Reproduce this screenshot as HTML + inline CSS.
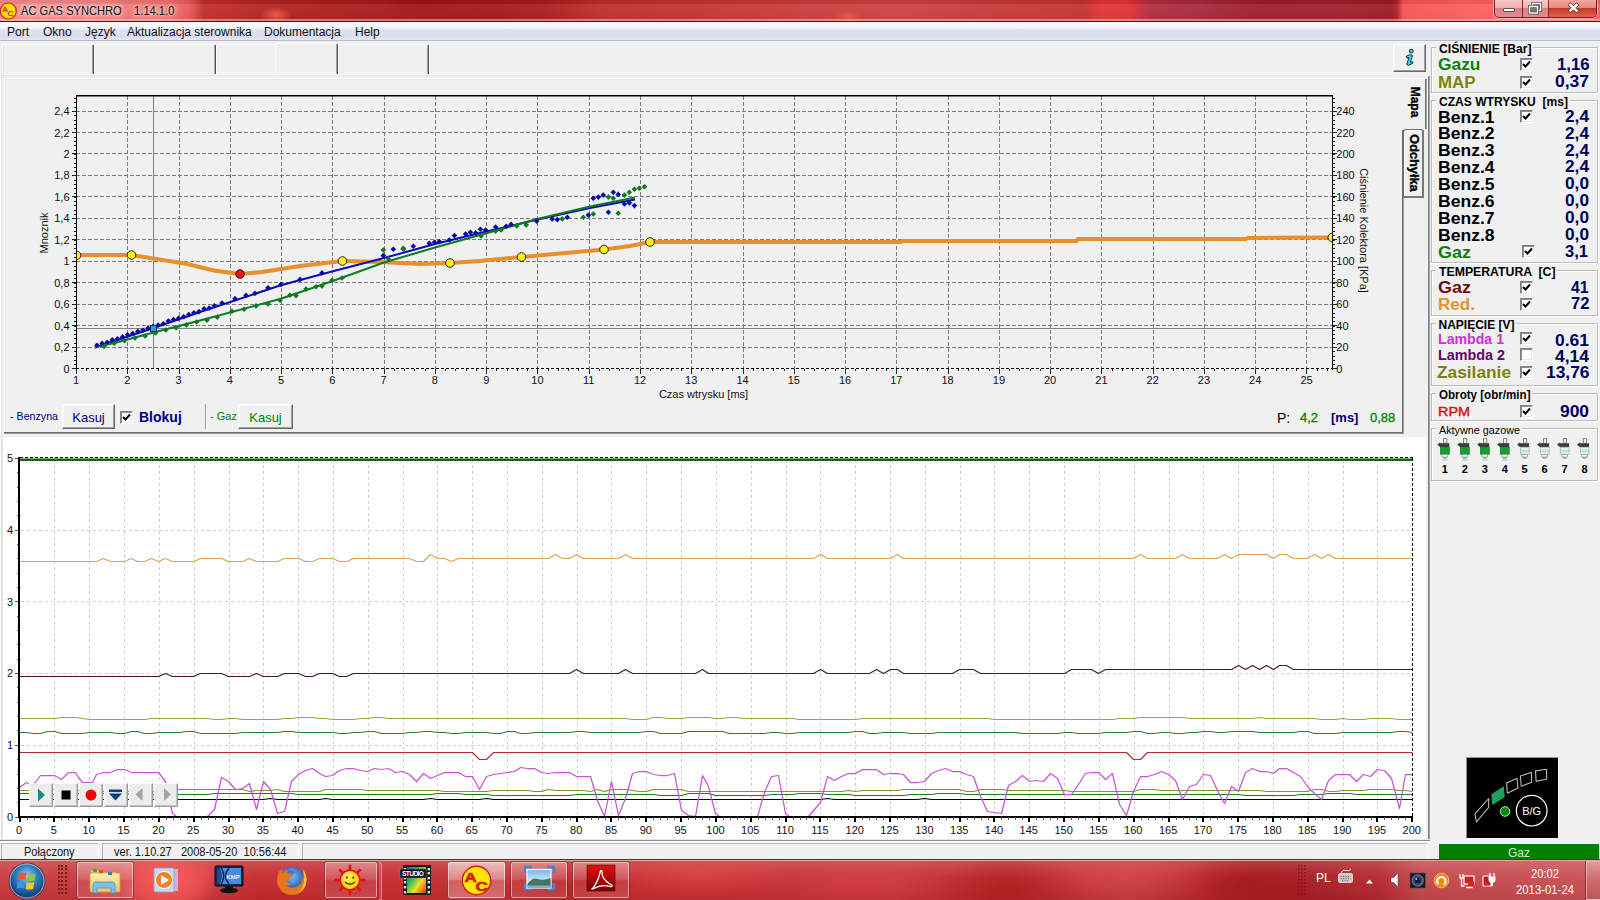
<!DOCTYPE html>
<html><head><meta charset="utf-8"><title>AC GAS SYNCHRO</title>
<style>
*{box-sizing:border-box;margin:0;padding:0}
html,body{width:1600px;height:900px;overflow:hidden;background:#f0f0f0;font-family:"Liberation Sans",sans-serif;font-size:12px;color:#000}
.a{position:absolute}
svg{position:absolute;overflow:visible}
svg text{font-family:"Liberation Sans",sans-serif}
#title{left:0;top:0;width:1600px;height:22px;background:
 linear-gradient(180deg,rgba(0,0,0,.05) 0,rgba(0,0,0,.05) 4px,rgba(255,255,255,.07) 4px,rgba(255,255,255,.04) 19px,rgba(255,190,190,.55) 19.5px,rgba(255,190,190,.55) 20.5px,rgba(0,0,0,0) 21px),
 radial-gradient(ellipse 16px 8px at 276px 15px,rgba(250,90,60,.85),transparent),
 radial-gradient(ellipse 14px 7px at 848px 17px,rgba(245,85,60,.7),transparent),
 radial-gradient(ellipse 40px 14px at 420px 4px,rgba(140,10,10,.4),transparent),
 linear-gradient(90deg,#f58a8a 0,#f27c7c 100px,#ee6a6a 170px,#e65656 190px,#c02a2a 204px,#b42222 260px,#ab1c1c 320px,#a41818 400px,#a01616 480px,#a61a1a 540px,#bd2a2a 600px,#c43030 700px,#c83a3a 800px,#c94040 900px,#c43636 1000px,#c23030 1085px,#e03232 1100px,#dc3030 1130px,#b02a3e 1150px,#a6263a 1200px,#9c1a28 1260px,#a01c2a 1340px,#9a1822 1392px,#b01c22 1397px,#f45252 1403px,#fa5e5e 1480px,#f95c5c 1600px);
 border-bottom:1px solid #5a1212}
#title .t{left:21px;top:4px;transform:scaleX(.927);transform-origin:0 0;font-size:12px;color:#111;white-space:pre;text-shadow:0 0 6px rgba(255,255,255,.9),0 0 9px rgba(255,255,255,.7),0 0 3px rgba(255,255,255,.6)}
#menu{left:0;top:22px;width:1600px;height:19px;background:linear-gradient(180deg,#fdfdfe 0,#f3f5fb 30%,#dfe3f1 45%,#d9ddee 85%,#e4e7f3 100%);border-bottom:1px solid #b7bccf}
#menu span{position:absolute;top:3px;font-size:12px;color:#111;white-space:pre}
.vs{position:absolute;width:3px;background:linear-gradient(90deg,#a4a4a4 0,#a4a4a4 33%,#555 33%,#555 67%,#fbfbfb 67%)}
.hl{position:absolute;height:1px;background:#fff}
.btn{position:absolute;background:#f0f0f0;border:1px solid;border-color:#fff #696969 #696969 #fff;box-shadow:inset -1px -1px 0 #a0a0a0,inset 1px 1px 0 #f8f8f8;font-size:13px;text-align:center}
.btn span{position:relative;top:5px}
.cb{position:absolute;width:13px;height:13px;background:#fff;border:1px solid;border-color:#808080 #fff #fff #808080;box-shadow:inset 1px 1px 0 #8c8c8c,inset -1px -1px 0 #e6e6e6}
.cb svg{left:-1px;top:-1px}
</style></head><body>
<div id="title" class="a">
 <svg style="left:0;top:2px" width="18" height="18" viewBox="0 0 18 18"><circle cx="8.3" cy="9" r="8" fill="#ffe000" stroke="#c8201a" stroke-width="1.2"/><text x="2.2" y="9.5" font-size="8" font-weight="bold" fill="#d0201a">A</text><text x="7.6" y="14.2" font-size="8" font-weight="bold" fill="#d0201a">C</text></svg>
 <div class="a t">AC GAS SYNCHRO    1.14.1.0</div>
 <!-- window buttons -->
 <div class="a" style="left:1494px;top:0;width:103px;height:18px;border:1px solid #6a2020;border-top:none;border-radius:0 0 5px 5px;background:linear-gradient(180deg,#f9caca 0,#f3aeae 45%,#db7e86 50%,#e28c92 100%);box-shadow:0 0 0 1px rgba(255,255,255,.45)"></div>
 <div class="a" style="left:1522px;top:0;width:1px;height:17px;background:#7a2a2a"></div>
 <div class="a" style="left:1548px;top:0;width:1px;height:17px;background:#7a2a2a"></div>
 <div class="a" style="left:1549px;top:0;width:47px;height:17px;border-radius:0 0 4px 0;background:linear-gradient(180deg,#f2aa9e 0,#e98a7a 45%,#c43a26 50%,#df644a 100%)"></div>
 <div class="a" style="left:1503px;top:8px;width:12px;height:4px;background:#fff;border:1px solid #555;border-radius:1px"></div>
 <svg style="left:1528px;top:2px" width="14" height="12" viewBox="0 0 14 12"><rect x="4.5" y="1.5" width="8" height="7" fill="none" stroke="#555" stroke-width="3"/><rect x="4.5" y="1.5" width="8" height="7" fill="none" stroke="#fff" stroke-width="1.4"/><rect x="1.5" y="4.5" width="8" height="6.5" fill="#8a7078" stroke="#555" stroke-width="3"/><rect x="1.5" y="4.5" width="8" height="6.5" fill="none" stroke="#fff" stroke-width="1.4"/></svg>
 <svg style="left:1567px;top:3px" width="13" height="10" viewBox="0 0 13 10"><path d="M3.4 2 L9.6 7.6 M9.6 2 L3.4 7.6" stroke="#5a3434" stroke-width="3.9" stroke-linecap="square"/><path d="M3.4 2 L9.6 7.6 M9.6 2 L3.4 7.6" stroke="#fff" stroke-width="2.5" stroke-linecap="square"/></svg>
</div>
<div id="menu" class="a">
 <span style="left:7px">Port</span><span style="left:43px">Okno</span><span style="left:85px">Język</span><span style="left:127px">Aktualizacja sterownika</span><span style="left:264px">Dokumentacja</span><span style="left:355px">Help</span>
</div>
<!-- toolbar -->
<div class="hl" style="left:3px;top:44px;width:90px"></div><div class="a" style="left:2px;top:44px;width:1px;height:31px;background:#fff"></div><div class="a" style="left:3px;top:45px;width:1px;height:29px;background:#e2e2e2"></div>
<div class="vs" style="left:92px;top:45px;height:29px"></div>
<div class="hl" style="left:95px;top:44px;width:120px"></div>
<div class="vs" style="left:214px;top:45px;height:29px"></div>
<div class="hl" style="left:217px;top:44px;width:58px"></div>
<div class="a" style="left:275px;top:44px;width:1px;height:31px;background:#fafafa"></div>
<div class="hl" style="left:276px;top:43px;width:61px"></div>
<div class="vs" style="left:336px;top:44px;height:30px"></div>
<div class="hl" style="left:339px;top:44px;width:89px"></div>
<div class="vs" style="left:427px;top:45px;height:29px"></div>
<div class="hl" style="left:0;top:74px;width:1392px;background:#fbfbfb"></div><div class="hl" style="left:1px;top:75px;width:1391px;background:#e4e4e4"></div>
<!-- upper panel -->
<div class="a" style="left:4px;top:78px;width:1400px;height:1px;background:#fff"></div>
<div class="a" style="left:4px;top:78px;width:1px;height:356px;background:#fff"></div>
<div class="a" style="left:4px;top:432px;width:1400px;height:2px;background:linear-gradient(180deg,#6e6e6e 0,#6e6e6e 50%,#9c9c9c 50%,#9c9c9c 100%)"></div>
<div class="a" style="left:1402px;top:130px;width:2px;height:304px;background:linear-gradient(90deg,#6e6e6e 0,#6e6e6e 50%,#9c9c9c 50%,#9c9c9c 100%)"></div>
<div class="a" style="left:0;top:75px;width:1px;height:765px;background:#fafafa"></div>
<div class="a" style="left:1px;top:75px;width:1px;height:362px;background:#e3e3e3"></div>
<div class="a" style="left:1px;top:436px;width:2.4px;height:404px;background:#e3e3e3"></div>
<div class="a" style="left:5px;top:79px;width:1397px;height:1px;background:#e6e6e6"></div>
<div class="a" style="left:5px;top:79px;width:1px;height:353px;background:#e6e6e6"></div>
<svg style="left:0;top:0" width="1600" height="440" viewBox="0 0 1600 440">
<path d="M127.5 95.5 V368.5 M179.5 95.5 V368.5 M230.5 95.5 V368.5 M281.5 95.5 V368.5 M332.5 95.5 V368.5 M384.5 95.5 V368.5 M435.5 95.5 V368.5 M486.5 95.5 V368.5 M537.5 95.5 V368.5 M589.5 95.5 V368.5 M640.5 95.5 V368.5 M691.5 95.5 V368.5 M743.5 95.5 V368.5 M794.5 95.5 V368.5 M845.5 95.5 V368.5 M896.5 95.5 V368.5 M948.5 95.5 V368.5 M999.5 95.5 V368.5 M1050.5 95.5 V368.5 M1101.5 95.5 V368.5 M1153.5 95.5 V368.5 M1204.5 95.5 V368.5 M1255.5 95.5 V368.5 M1306.5 95.5 V368.5 M76 347.5 H1332 M76 325.5 H1332 M76 304.5 H1332 M76 282.5 H1332 M76 261.5 H1332 M76 239.5 H1332 M76 218.5 H1332 M76 196.5 H1332 M76 175.5 H1332 M76 153.5 H1332 M76 132.5 H1332 M76 111.5 H1332" stroke="#7d7d7d" stroke-width="1" stroke-dasharray="4 2" fill="none" shape-rendering="crispEdges"/>
<path d="M153.5 95.5 V368.5 M76 328.5 H1332" stroke="#808080" stroke-width="1" fill="none" shape-rendering="crispEdges"/>
<path d="M76 95.8 H1333" stroke="#000" stroke-width="1.4" fill="none"/>
<path d="M76.5 95.5 V368.5 M1332.5 95.5 V369.5" stroke="#000" stroke-width="1" fill="none" shape-rendering="crispEdges"/>
<path d="M76 368.5 H1332" stroke="#000" stroke-width="1" stroke-dasharray="3 2" fill="none" shape-rendering="crispEdges"/>
<path d="M72 368.5 H76 M1332 368.5 H1337 M72 347.5 H76 M1332 347.5 H1337 M72 325.5 H76 M1332 325.5 H1337 M72 304.5 H76 M1332 304.5 H1337 M72 282.5 H76 M1332 282.5 H1337 M72 261.5 H76 M1332 261.5 H1337 M72 239.5 H76 M1332 239.5 H1337 M72 218.5 H76 M1332 218.5 H1337 M72 196.5 H76 M1332 196.5 H1337 M72 175.5 H76 M1332 175.5 H1337 M72 153.5 H76 M1332 153.5 H1337 M72 132.5 H76 M1332 132.5 H1337 M72 111.5 H76 M1332 111.5 H1337 M74 368.5 H76 M1332 368.5 H1335 M74 364.5 H76 M1332 364.5 H1335 M74 360.5 H76 M1332 360.5 H1335 M74 356.5 H76 M1332 356.5 H1335 M74 351.5 H76 M1332 351.5 H1335 M74 347.5 H76 M1332 347.5 H1335 M74 343.5 H76 M1332 343.5 H1335 M74 338.5 H76 M1332 338.5 H1335 M74 334.5 H76 M1332 334.5 H1335 M74 330.5 H76 M1332 330.5 H1335 M74 326.5 H76 M1332 326.5 H1335 M74 321.5 H76 M1332 321.5 H1335 M74 317.5 H76 M1332 317.5 H1335 M74 313.5 H76 M1332 313.5 H1335 M74 308.5 H76 M1332 308.5 H1335 M74 304.5 H76 M1332 304.5 H1335 M74 300.5 H76 M1332 300.5 H1335 M74 296.5 H76 M1332 296.5 H1335 M74 291.5 H76 M1332 291.5 H1335 M74 287.5 H76 M1332 287.5 H1335 M74 283.5 H76 M1332 283.5 H1335 M74 278.5 H76 M1332 278.5 H1335 M74 274.5 H76 M1332 274.5 H1335 M74 270.5 H76 M1332 270.5 H1335 M74 266.5 H76 M1332 266.5 H1335 M74 261.5 H76 M1332 261.5 H1335 M74 257.5 H76 M1332 257.5 H1335 M74 253.5 H76 M1332 253.5 H1335 M74 248.5 H76 M1332 248.5 H1335 M74 244.5 H76 M1332 244.5 H1335 M74 240.5 H76 M1332 240.5 H1335 M74 235.5 H76 M1332 235.5 H1335 M74 231.5 H76 M1332 231.5 H1335 M74 227.5 H76 M1332 227.5 H1335 M74 223.5 H76 M1332 223.5 H1335 M74 218.5 H76 M1332 218.5 H1335 M74 214.5 H76 M1332 214.5 H1335 M74 210.5 H76 M1332 210.5 H1335 M74 205.5 H76 M1332 205.5 H1335 M74 201.5 H76 M1332 201.5 H1335 M74 197.5 H76 M1332 197.5 H1335 M74 193.5 H76 M1332 193.5 H1335 M74 188.5 H76 M1332 188.5 H1335 M74 184.5 H76 M1332 184.5 H1335 M74 180.5 H76 M1332 180.5 H1335 M74 175.5 H76 M1332 175.5 H1335 M74 171.5 H76 M1332 171.5 H1335 M74 167.5 H76 M1332 167.5 H1335 M74 163.5 H76 M1332 163.5 H1335 M74 158.5 H76 M1332 158.5 H1335 M74 154.5 H76 M1332 154.5 H1335 M74 150.5 H76 M1332 150.5 H1335 M74 145.5 H76 M1332 145.5 H1335 M74 141.5 H76 M1332 141.5 H1335 M74 137.5 H76 M1332 137.5 H1335 M74 132.5 H76 M1332 132.5 H1335 M74 128.5 H76 M1332 128.5 H1335 M74 124.5 H76 M1332 124.5 H1335 M74 120.5 H76 M1332 120.5 H1335 M74 115.5 H76 M1332 115.5 H1335 M74 111.5 H76 M1332 111.5 H1335 M74 107.5 H76 M1332 107.5 H1335 M74 102.5 H76 M1332 102.5 H1335 M74 98.5 H76 M1332 98.5 H1335 M76.5 368.5 V373.5 M127.5 368.5 V373.5 M179.5 368.5 V373.5 M230.5 368.5 V373.5 M281.5 368.5 V373.5 M332.5 368.5 V373.5 M384.5 368.5 V373.5 M435.5 368.5 V373.5 M486.5 368.5 V373.5 M537.5 368.5 V373.5 M589.5 368.5 V373.5 M640.5 368.5 V373.5 M691.5 368.5 V373.5 M743.5 368.5 V373.5 M794.5 368.5 V373.5 M845.5 368.5 V373.5 M896.5 368.5 V373.5 M948.5 368.5 V373.5 M999.5 368.5 V373.5 M1050.5 368.5 V373.5 M1101.5 368.5 V373.5 M1153.5 368.5 V373.5 M1204.5 368.5 V373.5 M1255.5 368.5 V373.5 M1306.5 368.5 V373.5 M76.5 368.5 V370.5 M86.5 368.5 V370.5 M97.5 368.5 V370.5 M107.5 368.5 V370.5 M117.5 368.5 V370.5 M127.5 368.5 V370.5 M138.5 368.5 V370.5 M148.5 368.5 V370.5 M158.5 368.5 V370.5 M168.5 368.5 V370.5 M179.5 368.5 V370.5 M189.5 368.5 V370.5 M199.5 368.5 V370.5 M209.5 368.5 V370.5 M220.5 368.5 V370.5 M230.5 368.5 V370.5 M240.5 368.5 V370.5 M250.5 368.5 V370.5 M261.5 368.5 V370.5 M271.5 368.5 V370.5 M281.5 368.5 V370.5 M291.5 368.5 V370.5 M302.5 368.5 V370.5 M312.5 368.5 V370.5 M322.5 368.5 V370.5 M332.5 368.5 V370.5 M343.5 368.5 V370.5 M353.5 368.5 V370.5 M363.5 368.5 V370.5 M373.5 368.5 V370.5 M384.5 368.5 V370.5 M394.5 368.5 V370.5 M404.5 368.5 V370.5 M414.5 368.5 V370.5 M425.5 368.5 V370.5 M435.5 368.5 V370.5 M445.5 368.5 V370.5 M455.5 368.5 V370.5 M466.5 368.5 V370.5 M476.5 368.5 V370.5 M486.5 368.5 V370.5 M496.5 368.5 V370.5 M507.5 368.5 V370.5 M517.5 368.5 V370.5 M527.5 368.5 V370.5 M537.5 368.5 V370.5 M548.5 368.5 V370.5 M558.5 368.5 V370.5 M568.5 368.5 V370.5 M578.5 368.5 V370.5 M589.5 368.5 V370.5 M599.5 368.5 V370.5 M609.5 368.5 V370.5 M619.5 368.5 V370.5 M630.5 368.5 V370.5 M640.5 368.5 V370.5 M650.5 368.5 V370.5 M660.5 368.5 V370.5 M671.5 368.5 V370.5 M681.5 368.5 V370.5 M691.5 368.5 V370.5 M701.5 368.5 V370.5 M712.5 368.5 V370.5 M722.5 368.5 V370.5 M732.5 368.5 V370.5 M743.5 368.5 V370.5 M753.5 368.5 V370.5 M763.5 368.5 V370.5 M773.5 368.5 V370.5 M784.5 368.5 V370.5 M794.5 368.5 V370.5 M804.5 368.5 V370.5 M814.5 368.5 V370.5 M825.5 368.5 V370.5 M835.5 368.5 V370.5 M845.5 368.5 V370.5 M855.5 368.5 V370.5 M866.5 368.5 V370.5 M876.5 368.5 V370.5 M886.5 368.5 V370.5 M896.5 368.5 V370.5 M907.5 368.5 V370.5 M917.5 368.5 V370.5 M927.5 368.5 V370.5 M937.5 368.5 V370.5 M948.5 368.5 V370.5 M958.5 368.5 V370.5 M968.5 368.5 V370.5 M978.5 368.5 V370.5 M989.5 368.5 V370.5 M999.5 368.5 V370.5 M1009.5 368.5 V370.5 M1019.5 368.5 V370.5 M1030.5 368.5 V370.5 M1040.5 368.5 V370.5 M1050.5 368.5 V370.5 M1060.5 368.5 V370.5 M1071.5 368.5 V370.5 M1081.5 368.5 V370.5 M1091.5 368.5 V370.5 M1101.5 368.5 V370.5 M1112.5 368.5 V370.5 M1122.5 368.5 V370.5 M1132.5 368.5 V370.5 M1142.5 368.5 V370.5 M1153.5 368.5 V370.5 M1163.5 368.5 V370.5 M1173.5 368.5 V370.5 M1183.5 368.5 V370.5 M1194.5 368.5 V370.5 M1204.5 368.5 V370.5 M1214.5 368.5 V370.5 M1224.5 368.5 V370.5 M1235.5 368.5 V370.5 M1245.5 368.5 V370.5 M1255.5 368.5 V370.5 M1265.5 368.5 V370.5 M1276.5 368.5 V370.5 M1286.5 368.5 V370.5 M1296.5 368.5 V370.5 M1306.5 368.5 V370.5 M1317.5 368.5 V370.5 M1327.5 368.5 V370.5" stroke="#222" stroke-width="1" fill="none" shape-rendering="crispEdges"/>
<g font-size="11" fill="#111"><text x="69.5" y="372.5" text-anchor="end">0</text><text x="1336.3" y="372.5">0</text><text x="69.5" y="351" text-anchor="end">0,2</text><text x="1336.3" y="351">20</text><text x="69.5" y="329.6" text-anchor="end">0,4</text><text x="1336.3" y="329.6">40</text><text x="69.5" y="308.1" text-anchor="end">0,6</text><text x="1336.3" y="308.1">60</text><text x="69.5" y="286.7" text-anchor="end">0,8</text><text x="1336.3" y="286.7">80</text><text x="69.5" y="265.2" text-anchor="end">1</text><text x="1336.3" y="265.2">100</text><text x="69.5" y="243.8" text-anchor="end">1,2</text><text x="1336.3" y="243.8">120</text><text x="69.5" y="222.3" text-anchor="end">1,4</text><text x="1336.3" y="222.3">140</text><text x="69.5" y="200.8" text-anchor="end">1,6</text><text x="1336.3" y="200.8">160</text><text x="69.5" y="179.4" text-anchor="end">1,8</text><text x="1336.3" y="179.4">180</text><text x="69.5" y="157.9" text-anchor="end">2</text><text x="1336.3" y="157.9">200</text><text x="69.5" y="136.5" text-anchor="end">2,2</text><text x="1336.3" y="136.5">220</text><text x="69.5" y="115" text-anchor="end">2,4</text><text x="1336.3" y="115">240</text><text x="76" y="383.7" text-anchor="middle">1</text><text x="127.3" y="383.7" text-anchor="middle">2</text><text x="178.5" y="383.7" text-anchor="middle">3</text><text x="229.8" y="383.7" text-anchor="middle">4</text><text x="281.1" y="383.7" text-anchor="middle">5</text><text x="332.4" y="383.7" text-anchor="middle">6</text><text x="383.6" y="383.7" text-anchor="middle">7</text><text x="434.9" y="383.7" text-anchor="middle">8</text><text x="486.2" y="383.7" text-anchor="middle">9</text><text x="537.4" y="383.7" text-anchor="middle">10</text><text x="588.7" y="383.7" text-anchor="middle">11</text><text x="640" y="383.7" text-anchor="middle">12</text><text x="691.2" y="383.7" text-anchor="middle">13</text><text x="742.5" y="383.7" text-anchor="middle">14</text><text x="793.8" y="383.7" text-anchor="middle">15</text><text x="845.1" y="383.7" text-anchor="middle">16</text><text x="896.3" y="383.7" text-anchor="middle">17</text><text x="947.6" y="383.7" text-anchor="middle">18</text><text x="998.9" y="383.7" text-anchor="middle">19</text><text x="1050.1" y="383.7" text-anchor="middle">20</text><text x="1101.4" y="383.7" text-anchor="middle">21</text><text x="1152.7" y="383.7" text-anchor="middle">22</text><text x="1203.9" y="383.7" text-anchor="middle">23</text><text x="1255.2" y="383.7" text-anchor="middle">24</text><text x="1306.5" y="383.7" text-anchor="middle">25</text><text x="703.5" y="398" text-anchor="middle">Czas wtrysku [ms]</text><text transform="translate(48,233) rotate(-90)" text-anchor="middle">Mnoznik</text><text transform="translate(1359.5,230.5) rotate(90)" text-anchor="middle">Ciśnienie Kolektora [KPa]</text></g>
<polyline points="76,255 131.5,255 150,258 185,263.5 214,270.5 240,274 262,272 300,266 342.5,261 380,262 420,264 450,263 480,261 521.5,257 560,253.5 604,249.5 630,246 650,242 700,242 901,242 903,241 1076,241 1078,239 1246,239 1248,238 1332,237.5" stroke="#e8902c" stroke-width="4" fill="none" stroke-linejoin="round"/>
<polyline points="95,347.5 153.5,328 200,312 280,285.5 330,272 384,258 435,244 480,233 537.5,219.5 590,208 635,199.5" stroke="#0c0cbe" stroke-width="2" fill="none"/>
<polyline points="95,347.5 120,341.5 153.5,332.5 200,320.5 280,299 330,282 384,262.5 435,247.5 480,235 537.5,219 590,206.5 635,197.5" stroke="#0e7a22" stroke-width="2" fill="none"/>
<path d="M97 342.5 l2.8 2.8 l-2.8 2.8 l-2.8 -2.8 z" fill="#0a0aac"/><path d="M102.1 340.6 l2.8 2.8 l-2.8 2.8 l-2.8 -2.8 z" fill="#0a0aac"/><path d="M107.2 339.5 l2.8 2.8 l-2.8 2.8 l-2.8 -2.8 z" fill="#0a0aac"/><path d="M112.3 337.1 l2.8 2.8 l-2.8 2.8 l-2.8 -2.8 z" fill="#0a0aac"/><path d="M117.4 336 l2.8 2.8 l-2.8 2.8 l-2.8 -2.8 z" fill="#0a0aac"/><path d="M122.5 334.1 l2.8 2.8 l-2.8 2.8 l-2.8 -2.8 z" fill="#0a0aac"/><path d="M127.6 332 l2.8 2.8 l-2.8 2.8 l-2.8 -2.8 z" fill="#0a0aac"/><path d="M132.7 330.8 l2.8 2.8 l-2.8 2.8 l-2.8 -2.8 z" fill="#0a0aac"/><path d="M137.8 328.6 l2.8 2.8 l-2.8 2.8 l-2.8 -2.8 z" fill="#0a0aac"/><path d="M142.9 327.4 l2.8 2.8 l-2.8 2.8 l-2.8 -2.8 z" fill="#0a0aac"/><path d="M148 325.2 l2.8 2.8 l-2.8 2.8 l-2.8 -2.8 z" fill="#0a0aac"/><path d="M153.1 323.5 l2.8 2.8 l-2.8 2.8 l-2.8 -2.8 z" fill="#0a0aac"/><path d="M158.2 322.2 l2.8 2.8 l-2.8 2.8 l-2.8 -2.8 z" fill="#0a0aac"/><path d="M163.3 320.9 l2.8 2.8 l-2.8 2.8 l-2.8 -2.8 z" fill="#0a0aac"/><path d="M168.4 318.3 l2.8 2.8 l-2.8 2.8 l-2.8 -2.8 z" fill="#0a0aac"/><path d="M173.5 316.7 l2.8 2.8 l-2.8 2.8 l-2.8 -2.8 z" fill="#0a0aac"/><path d="M178.6 315.4 l2.8 2.8 l-2.8 2.8 l-2.8 -2.8 z" fill="#0a0aac"/><path d="M183.7 314 l2.8 2.8 l-2.8 2.8 l-2.8 -2.8 z" fill="#0a0aac"/><path d="M188.8 311.8 l2.8 2.8 l-2.8 2.8 l-2.8 -2.8 z" fill="#0a0aac"/><path d="M193.9 309.9 l2.8 2.8 l-2.8 2.8 l-2.8 -2.8 z" fill="#0a0aac"/><path d="M199 308.8 l2.8 2.8 l-2.8 2.8 l-2.8 -2.8 z" fill="#0a0aac"/><path d="M204.1 306 l2.8 2.8 l-2.8 2.8 l-2.8 -2.8 z" fill="#0a0aac"/><path d="M209.2 305.3 l2.8 2.8 l-2.8 2.8 l-2.8 -2.8 z" fill="#0a0aac"/><path d="M214.3 302.9 l2.8 2.8 l-2.8 2.8 l-2.8 -2.8 z" fill="#0a0aac"/><path d="M222 300.2 l2.8 2.8 l-2.8 2.8 l-2.8 -2.8 z" fill="#0a0aac"/><path d="M235 295.8 l2.8 2.8 l-2.8 2.8 l-2.8 -2.8 z" fill="#0a0aac"/><path d="M246 292.6 l2.8 2.8 l-2.8 2.8 l-2.8 -2.8 z" fill="#0a0aac"/><path d="M255 290.6 l2.8 2.8 l-2.8 2.8 l-2.8 -2.8 z" fill="#0a0aac"/><path d="M268 285 l2.8 2.8 l-2.8 2.8 l-2.8 -2.8 z" fill="#0a0aac"/><path d="M281 281.6 l2.8 2.8 l-2.8 2.8 l-2.8 -2.8 z" fill="#0a0aac"/><path d="M300 276.6 l2.8 2.8 l-2.8 2.8 l-2.8 -2.8 z" fill="#0a0aac"/><path d="M322 270.1 l2.8 2.8 l-2.8 2.8 l-2.8 -2.8 z" fill="#0a0aac"/><path d="M104 343.6 l2.8 2.8 l-2.8 2.8 l-2.8 -2.8 z" fill="#0e7a22"/><path d="M114.3 340.4 l2.8 2.8 l-2.8 2.8 l-2.8 -2.8 z" fill="#0e7a22"/><path d="M124.6 337.8 l2.8 2.8 l-2.8 2.8 l-2.8 -2.8 z" fill="#0e7a22"/><path d="M134.9 335.2 l2.8 2.8 l-2.8 2.8 l-2.8 -2.8 z" fill="#0e7a22"/><path d="M145.2 333.2 l2.8 2.8 l-2.8 2.8 l-2.8 -2.8 z" fill="#0e7a22"/><path d="M155.5 330.1 l2.8 2.8 l-2.8 2.8 l-2.8 -2.8 z" fill="#0e7a22"/><path d="M165.8 327.2 l2.8 2.8 l-2.8 2.8 l-2.8 -2.8 z" fill="#0e7a22"/><path d="M176.1 325 l2.8 2.8 l-2.8 2.8 l-2.8 -2.8 z" fill="#0e7a22"/><path d="M186.4 322.1 l2.8 2.8 l-2.8 2.8 l-2.8 -2.8 z" fill="#0e7a22"/><path d="M196.7 319.2 l2.8 2.8 l-2.8 2.8 l-2.8 -2.8 z" fill="#0e7a22"/><path d="M207 317.3 l2.8 2.8 l-2.8 2.8 l-2.8 -2.8 z" fill="#0e7a22"/><path d="M217.3 314.4 l2.8 2.8 l-2.8 2.8 l-2.8 -2.8 z" fill="#0e7a22"/><path d="M232 308.5 l2.8 2.8 l-2.8 2.8 l-2.8 -2.8 z" fill="#0e7a22"/><path d="M244 306.5 l2.8 2.8 l-2.8 2.8 l-2.8 -2.8 z" fill="#0e7a22"/><path d="M256 303.1 l2.8 2.8 l-2.8 2.8 l-2.8 -2.8 z" fill="#0e7a22"/><path d="M268 301.2 l2.8 2.8 l-2.8 2.8 l-2.8 -2.8 z" fill="#0e7a22"/><path d="M280 297.4 l2.8 2.8 l-2.8 2.8 l-2.8 -2.8 z" fill="#0e7a22"/><path d="M290 292.4 l2.8 2.8 l-2.8 2.8 l-2.8 -2.8 z" fill="#0e7a22"/><path d="M296 292.9 l2.8 2.8 l-2.8 2.8 l-2.8 -2.8 z" fill="#0e7a22"/><path d="M306 286.3 l2.8 2.8 l-2.8 2.8 l-2.8 -2.8 z" fill="#0e7a22"/><path d="M316 284 l2.8 2.8 l-2.8 2.8 l-2.8 -2.8 z" fill="#0e7a22"/><path d="M322 283.2 l2.8 2.8 l-2.8 2.8 l-2.8 -2.8 z" fill="#0e7a22"/><path d="M332 277.5 l2.8 2.8 l-2.8 2.8 l-2.8 -2.8 z" fill="#0e7a22"/><path d="M342 275.2 l2.8 2.8 l-2.8 2.8 l-2.8 -2.8 z" fill="#0e7a22"/><path d="M593.3 195.4 l2.8 2.8 l-2.8 2.8 l-2.8 -2.8 z" fill="#0a0aac"/><path d="M598.4 194.3 l2.8 2.8 l-2.8 2.8 l-2.8 -2.8 z" fill="#0a0aac"/><path d="M603.3 192.3 l2.8 2.8 l-2.8 2.8 l-2.8 -2.8 z" fill="#0a0aac"/><path d="M613.3 189.4 l2.8 2.8 l-2.8 2.8 l-2.8 -2.8 z" fill="#0a0aac"/><path d="M618.2 191.6 l2.8 2.8 l-2.8 2.8 l-2.8 -2.8 z" fill="#0a0aac"/><path d="M608.4 209.4 l2.8 2.8 l-2.8 2.8 l-2.8 -2.8 z" fill="#0a0aac"/><path d="M624.4 201.2 l2.8 2.8 l-2.8 2.8 l-2.8 -2.8 z" fill="#0a0aac"/><path d="M629.3 200.1 l2.8 2.8 l-2.8 2.8 l-2.8 -2.8 z" fill="#0a0aac"/><path d="M634.4 202.8 l2.8 2.8 l-2.8 2.8 l-2.8 -2.8 z" fill="#0a0aac"/><path d="M588.4 212.3 l2.8 2.8 l-2.8 2.8 l-2.8 -2.8 z" fill="#0a0aac"/><path d="M567.3 214.5 l2.8 2.8 l-2.8 2.8 l-2.8 -2.8 z" fill="#0a0aac"/><path d="M557.3 216.8 l2.8 2.8 l-2.8 2.8 l-2.8 -2.8 z" fill="#0a0aac"/><path d="M552.2 216.1 l2.8 2.8 l-2.8 2.8 l-2.8 -2.8 z" fill="#0a0aac"/><path d="M536.7 218.3 l2.8 2.8 l-2.8 2.8 l-2.8 -2.8 z" fill="#0a0aac"/><path d="M511.1 221.6 l2.8 2.8 l-2.8 2.8 l-2.8 -2.8 z" fill="#0a0aac"/><path d="M506.2 223.4 l2.8 2.8 l-2.8 2.8 l-2.8 -2.8 z" fill="#0a0aac"/><path d="M495.6 224.3 l2.8 2.8 l-2.8 2.8 l-2.8 -2.8 z" fill="#0a0aac"/><path d="M485.6 227.2 l2.8 2.8 l-2.8 2.8 l-2.8 -2.8 z" fill="#0a0aac"/><path d="M480.4 226.5 l2.8 2.8 l-2.8 2.8 l-2.8 -2.8 z" fill="#0a0aac"/><path d="M475.6 230.1 l2.8 2.8 l-2.8 2.8 l-2.8 -2.8 z" fill="#0a0aac"/><path d="M470.4 229.4 l2.8 2.8 l-2.8 2.8 l-2.8 -2.8 z" fill="#0a0aac"/><path d="M465.6 231.2 l2.8 2.8 l-2.8 2.8 l-2.8 -2.8 z" fill="#0a0aac"/><path d="M454.4 232.8 l2.8 2.8 l-2.8 2.8 l-2.8 -2.8 z" fill="#0a0aac"/><path d="M449.3 237.2 l2.8 2.8 l-2.8 2.8 l-2.8 -2.8 z" fill="#0a0aac"/><path d="M439.3 238.8 l2.8 2.8 l-2.8 2.8 l-2.8 -2.8 z" fill="#0a0aac"/><path d="M434.4 239.4 l2.8 2.8 l-2.8 2.8 l-2.8 -2.8 z" fill="#0a0aac"/><path d="M429.3 240.5 l2.8 2.8 l-2.8 2.8 l-2.8 -2.8 z" fill="#0a0aac"/><path d="M413.3 243.4 l2.8 2.8 l-2.8 2.8 l-2.8 -2.8 z" fill="#0a0aac"/><path d="M403.3 246.1 l2.8 2.8 l-2.8 2.8 l-2.8 -2.8 z" fill="#0a0aac"/><path d="M393.3 246.5 l2.8 2.8 l-2.8 2.8 l-2.8 -2.8 z" fill="#0a0aac"/><path d="M383.3 252.8 l2.8 2.8 l-2.8 2.8 l-2.8 -2.8 z" fill="#0a0aac"/><path d="M644.4 183.9 l2.8 2.8 l-2.8 2.8 l-2.8 -2.8 z" fill="#0e7a22"/><path d="M639.3 185.4 l2.8 2.8 l-2.8 2.8 l-2.8 -2.8 z" fill="#0e7a22"/><path d="M634.4 186.5 l2.8 2.8 l-2.8 2.8 l-2.8 -2.8 z" fill="#0e7a22"/><path d="M629.3 189.4 l2.8 2.8 l-2.8 2.8 l-2.8 -2.8 z" fill="#0e7a22"/><path d="M624.4 192.3 l2.8 2.8 l-2.8 2.8 l-2.8 -2.8 z" fill="#0e7a22"/><path d="M613.3 195.4 l2.8 2.8 l-2.8 2.8 l-2.8 -2.8 z" fill="#0e7a22"/><path d="M608.4 194.3 l2.8 2.8 l-2.8 2.8 l-2.8 -2.8 z" fill="#0e7a22"/><path d="M618.2 210.5 l2.8 2.8 l-2.8 2.8 l-2.8 -2.8 z" fill="#0e7a22"/><path d="M593.3 211.2 l2.8 2.8 l-2.8 2.8 l-2.8 -2.8 z" fill="#0e7a22"/><path d="M583.3 214.5 l2.8 2.8 l-2.8 2.8 l-2.8 -2.8 z" fill="#0e7a22"/><path d="M562.2 216.1 l2.8 2.8 l-2.8 2.8 l-2.8 -2.8 z" fill="#0e7a22"/><path d="M526.2 222.1 l2.8 2.8 l-2.8 2.8 l-2.8 -2.8 z" fill="#0e7a22"/><path d="M516.7 223.2 l2.8 2.8 l-2.8 2.8 l-2.8 -2.8 z" fill="#0e7a22"/><path d="M501.1 227.2 l2.8 2.8 l-2.8 2.8 l-2.8 -2.8 z" fill="#0e7a22"/><path d="M495.6 228.3 l2.8 2.8 l-2.8 2.8 l-2.8 -2.8 z" fill="#0e7a22"/><path d="M481.1 233.2 l2.8 2.8 l-2.8 2.8 l-2.8 -2.8 z" fill="#0e7a22"/><path d="M383.3 247.2 l2.8 2.8 l-2.8 2.8 l-2.8 -2.8 z" fill="#0e7a22"/><path d="M388.4 256.1 l2.8 2.8 l-2.8 2.8 l-2.8 -2.8 z" fill="#0e7a22"/><path d="M403.3 245.6 l2.8 2.8 l-2.8 2.8 l-2.8 -2.8 z" fill="#0e7a22"/>
<path d="M76.5 251 a4.3 4.3 0 0 1 0 8.6 z" fill="#ffee10" stroke="#222" stroke-width="1"/>
<circle cx="131.5" cy="255" r="4.3" fill="#ffee10" stroke="#222" stroke-width="1"/>
<circle cx="342.5" cy="261" r="4.3" fill="#ffee10" stroke="#222" stroke-width="1"/>
<circle cx="450" cy="263" r="4.3" fill="#ffee10" stroke="#222" stroke-width="1"/>
<circle cx="521.5" cy="257" r="4.3" fill="#ffee10" stroke="#222" stroke-width="1"/>
<circle cx="604" cy="249.5" r="4.3" fill="#ffee10" stroke="#222" stroke-width="1"/>
<circle cx="650" cy="242" r="4.3" fill="#ffee10" stroke="#222" stroke-width="1"/>
<path d="M1332.5 233 a4.5 4.5 0 0 0 0 9 z" fill="#ffee10" stroke="#222" stroke-width="1"/>
<circle cx="240" cy="274" r="4.3" fill="#e01818" stroke="#501010" stroke-width="1"/>
<rect x="150.5" y="325.5" width="6" height="6" fill="#2f9ad8" stroke="#103060" stroke-width="1"/>
</svg>
<div class="a" style="left:10px;top:410px;font-size:11px;color:#000080;white-space:pre;transform:scaleX(.97);transform-origin:0 0">- Benzyna</div>
<div class="btn" style="left:62px;top:404px;width:53px;height:25px;color:#000080"><span>Kasuj</span></div>
<div class="cb" style="left:120px;top:411px"><svg width="13" height="13" viewBox="0 0 13 13"><path d="M3 6 L5.5 8.5 L10 3.5" stroke="#000" stroke-width="2" fill="none"/></svg></div>
<div class="a" style="left:139px;top:409px;font-size:14px;font-weight:bold;color:#00008b;white-space:pre">Blokuj</div>
<div class="a" style="left:205px;top:404px;width:2px;height:25px;background:linear-gradient(90deg,#9a9a9a 0,#9a9a9a 50%,#fff 50%)"></div>
<div class="a" style="left:210px;top:410px;font-size:11px;color:#008000;white-space:pre">- Gaz</div>
<div class="btn" style="left:238px;top:404px;width:55px;height:25px;color:#008000"><span>Kasuj</span></div>
<div class="a" style="left:1277px;top:410px;font-size:14px;white-space:pre;color:#000">P:</div>
<div class="a" style="left:1300px;top:410px;font-size:13px;white-space:pre;color:#008000;-webkit-text-stroke:.3px #008000">4,2</div>
<div class="a" style="left:1331px;top:410px;font-size:13px;font-weight:bold;white-space:pre;color:#000070">[ms]</div>
<div class="a" style="left:1370px;top:410px;font-size:13px;white-space:pre;color:#008000;-webkit-text-stroke:.3px #008000">0,88</div>
<!-- right panel -->
<div class="a" style="left:1428px;top:76px;width:2px;height:764px;background:linear-gradient(90deg,#828282 0,#828282 50%,#a0a0a0 50%)"></div>
<div class="a" style="left:1431px;top:47px;width:167px;height:46px;border:1px solid #bdbdbd;box-shadow:1px 1px 0 #fff,inset 1px 1px 0 #fff"></div><div class="a" style="left:1436px;top:43px;width:97px;height:12px;background:#f0f0f0"></div><div class="a" style="left:1438.5px;top:42.1px;font-size:12px;color:#000;font-weight:bold;white-space:pre;line-height:normal;transform:scaleX(1.013);transform-origin:0 0;">CIŚNIENIE [Bar]</div>
<div class="a" style="left:1437.5px;top:56.1px;font-size:16px;color:#108010;font-weight:bold;white-space:pre;line-height:normal;transform:scaleX(1.086);transform-origin:0 0;">Gazu</div>
<div class="cb" style="left:1520px;top:58px"><svg width="13" height="13" viewBox="0 0 13 13"><path d="M3 6 L5.5 8.5 L10 3.5" stroke="#000" stroke-width="2" fill="none"/></svg></div>
<div class="a" style="left:1556.5px;top:54.6px;font-size:17px;color:#000060;font-weight:bold;white-space:pre;line-height:normal;transform:scaleX(0.982);transform-origin:0 0;">1,16</div>
<div class="a" style="left:1437.5px;top:73.9px;font-size:16px;color:#808010;font-weight:bold;white-space:pre;line-height:normal;transform:scaleX(1.055);transform-origin:0 0;">MAP</div>
<div class="cb" style="left:1520px;top:76px"><svg width="13" height="13" viewBox="0 0 13 13"><path d="M3 6 L5.5 8.5 L10 3.5" stroke="#000" stroke-width="2" fill="none"/></svg></div>
<div class="a" style="left:1555.0px;top:72.3px;font-size:17px;color:#000060;font-weight:bold;white-space:pre;line-height:normal;transform:scaleX(1.028);transform-origin:0 0;">0,37</div>
<div class="a" style="left:1431px;top:100px;width:167px;height:163px;border:1px solid #bdbdbd;box-shadow:1px 1px 0 #fff,inset 1px 1px 0 #fff"></div><div class="a" style="left:1436px;top:96px;width:134px;height:12px;background:#f0f0f0"></div><div class="a" style="left:1438.5px;top:95.1px;font-size:12px;color:#000;font-weight:bold;white-space:pre;line-height:normal;transform:scaleX(1.006);transform-origin:0 0;">CZAS WTRYSKU  [ms]</div>
<div class="a" style="left:1437.5px;top:108.9px;font-size:16px;color:#000;font-weight:bold;white-space:pre;line-height:normal;transform:scaleX(1.096);transform-origin:0 0;">Benz.1</div>
<div class="a" style="left:1565.0px;top:107.4px;font-size:17px;color:#000060;font-weight:bold;white-space:pre;line-height:normal;transform:scaleX(1.016);transform-origin:0 0;">2,4</div>
<div class="a" style="left:1437.5px;top:125.4px;font-size:16px;color:#000;font-weight:bold;white-space:pre;line-height:normal;transform:scaleX(1.096);transform-origin:0 0;">Benz.2</div>
<div class="a" style="left:1565.0px;top:123.9px;font-size:17px;color:#000060;font-weight:bold;white-space:pre;line-height:normal;transform:scaleX(1.016);transform-origin:0 0;">2,4</div>
<div class="a" style="left:1437.5px;top:142.1px;font-size:16px;color:#000;font-weight:bold;white-space:pre;line-height:normal;transform:scaleX(1.096);transform-origin:0 0;">Benz.3</div>
<div class="a" style="left:1565.0px;top:140.6px;font-size:17px;color:#000060;font-weight:bold;white-space:pre;line-height:normal;transform:scaleX(1.016);transform-origin:0 0;">2,4</div>
<div class="a" style="left:1437.5px;top:158.9px;font-size:16px;color:#000;font-weight:bold;white-space:pre;line-height:normal;transform:scaleX(1.096);transform-origin:0 0;">Benz.4</div>
<div class="a" style="left:1565.0px;top:157.4px;font-size:17px;color:#000060;font-weight:bold;white-space:pre;line-height:normal;transform:scaleX(1.016);transform-origin:0 0;">2,4</div>
<div class="a" style="left:1437.5px;top:175.7px;font-size:16px;color:#000;font-weight:bold;white-space:pre;line-height:normal;transform:scaleX(1.096);transform-origin:0 0;">Benz.5</div>
<div class="a" style="left:1565.0px;top:174.2px;font-size:17px;color:#000060;font-weight:bold;white-space:pre;line-height:normal;transform:scaleX(1.016);transform-origin:0 0;">0,0</div>
<div class="a" style="left:1437.5px;top:192.9px;font-size:16px;color:#000;font-weight:bold;white-space:pre;line-height:normal;transform:scaleX(1.096);transform-origin:0 0;">Benz.6</div>
<div class="a" style="left:1565.0px;top:191.4px;font-size:17px;color:#000060;font-weight:bold;white-space:pre;line-height:normal;transform:scaleX(1.016);transform-origin:0 0;">0,0</div>
<div class="a" style="left:1437.5px;top:209.9px;font-size:16px;color:#000;font-weight:bold;white-space:pre;line-height:normal;transform:scaleX(1.096);transform-origin:0 0;">Benz.7</div>
<div class="a" style="left:1565.0px;top:208.4px;font-size:17px;color:#000060;font-weight:bold;white-space:pre;line-height:normal;transform:scaleX(1.016);transform-origin:0 0;">0,0</div>
<div class="a" style="left:1437.5px;top:226.7px;font-size:16px;color:#000;font-weight:bold;white-space:pre;line-height:normal;transform:scaleX(1.096);transform-origin:0 0;">Benz.8</div>
<div class="a" style="left:1565.0px;top:225.2px;font-size:17px;color:#000060;font-weight:bold;white-space:pre;line-height:normal;transform:scaleX(1.016);transform-origin:0 0;">0,0</div>
<div class="cb" style="left:1520px;top:110px"><svg width="13" height="13" viewBox="0 0 13 13"><path d="M3 6 L5.5 8.5 L10 3.5" stroke="#000" stroke-width="2" fill="none"/></svg></div>
<div class="a" style="left:1437.5px;top:243.9px;font-size:16px;color:#108010;font-weight:bold;white-space:pre;line-height:normal;transform:scaleX(1.125);transform-origin:0 0;">Gaz</div>
<div class="cb" style="left:1522px;top:245px"><svg width="13" height="13" viewBox="0 0 13 13"><path d="M3 6 L5.5 8.5 L10 3.5" stroke="#000" stroke-width="2" fill="none"/></svg></div>
<div class="a" style="left:1565.0px;top:242.4px;font-size:17px;color:#000060;font-weight:bold;white-space:pre;line-height:normal;transform:scaleX(0.973);transform-origin:0 0;">3,1</div>
<div class="a" style="left:1431px;top:270px;width:167px;height:46px;border:1px solid #bdbdbd;box-shadow:1px 1px 0 #fff,inset 1px 1px 0 #fff"></div><div class="a" style="left:1436px;top:266px;width:121px;height:12px;background:#f0f0f0"></div><div class="a" style="left:1438.5px;top:265.1px;font-size:12px;color:#000;font-weight:bold;white-space:pre;line-height:normal;transform:scaleX(1.022);transform-origin:0 0;">TEMPERATURA  [C]</div>
<div class="a" style="left:1437.5px;top:279.2px;font-size:16px;color:#701010;font-weight:bold;white-space:pre;line-height:normal;transform:scaleX(1.125);transform-origin:0 0;">Gaz</div>
<div class="cb" style="left:1520px;top:281px"><svg width="13" height="13" viewBox="0 0 13 13"><path d="M3 6 L5.5 8.5 L10 3.5" stroke="#000" stroke-width="2" fill="none"/></svg></div>
<div class="a" style="left:1570.5px;top:277.6px;font-size:17px;color:#000060;font-weight:bold;white-space:pre;line-height:normal;transform:scaleX(0.925);transform-origin:0 0;">41</div>
<div class="a" style="left:1437.5px;top:295.9px;font-size:16px;color:#e8902c;font-weight:bold;white-space:pre;line-height:normal;transform:scaleX(1.067);transform-origin:0 0;">Red.</div>
<div class="cb" style="left:1520px;top:298px"><svg width="13" height="13" viewBox="0 0 13 13"><path d="M3 6 L5.5 8.5 L10 3.5" stroke="#000" stroke-width="2" fill="none"/></svg></div>
<div class="a" style="left:1570.5px;top:294.4px;font-size:17px;color:#000060;font-weight:bold;white-space:pre;line-height:normal;transform:scaleX(0.978);transform-origin:0 0;">72</div>
<div class="a" style="left:1431px;top:323px;width:167px;height:63px;border:1px solid #bdbdbd;box-shadow:1px 1px 0 #fff,inset 1px 1px 0 #fff"></div><div class="a" style="left:1436px;top:319px;width:80px;height:12px;background:#f0f0f0"></div><div class="a" style="left:1438.5px;top:318.1px;font-size:12px;color:#000;font-weight:bold;white-space:pre;line-height:normal;transform:scaleX(1.000);transform-origin:0 0;">NAPIĘCIE [V]</div>
<div class="a" style="left:1437.5px;top:331.2px;font-size:14px;color:#d030d0;font-weight:bold;white-space:pre;line-height:normal;transform:scaleX(1.010);transform-origin:0 0;">Lambda 1</div>
<div class="cb" style="left:1520px;top:332px"><svg width="13" height="13" viewBox="0 0 13 13"><path d="M3 6 L5.5 8.5 L10 3.5" stroke="#000" stroke-width="2" fill="none"/></svg></div>
<div class="a" style="left:1554.5px;top:332.1px;font-size:16px;color:#000060;font-weight:bold;white-space:pre;line-height:normal;transform:scaleX(1.092);transform-origin:0 0;">0.61</div>
<div class="a" style="left:1437.5px;top:346.9px;font-size:14px;color:#600868;font-weight:bold;white-space:pre;line-height:normal;transform:scaleX(1.025);transform-origin:0 0;">Lambda 2</div>
<div class="cb" style="left:1520px;top:348px"></div>
<div class="a" style="left:1555.0px;top:348.1px;font-size:16px;color:#000060;font-weight:bold;white-space:pre;line-height:normal;transform:scaleX(1.092);transform-origin:0 0;">4,14</div>
<div class="a" style="left:1437.0px;top:364.0px;font-size:16px;color:#808010;font-weight:bold;white-space:pre;line-height:normal;transform:scaleX(1.081);transform-origin:0 0;">Zasilanie</div>
<div class="cb" style="left:1520px;top:366px"><svg width="13" height="13" viewBox="0 0 13 13"><path d="M3 6 L5.5 8.5 L10 3.5" stroke="#000" stroke-width="2" fill="none"/></svg></div>
<div class="a" style="left:1545.5px;top:362.6px;font-size:17px;color:#000060;font-weight:bold;white-space:pre;line-height:normal;transform:scaleX(1.023);transform-origin:0 0;">13,76</div>
<div class="a" style="left:1431px;top:393px;width:167px;height:28px;border:1px solid #bdbdbd;box-shadow:1px 1px 0 #fff,inset 1px 1px 0 #fff"></div><div class="a" style="left:1436px;top:389px;width:96px;height:12px;background:#f0f0f0"></div><div class="a" style="left:1438.5px;top:388.1px;font-size:12px;color:#000;font-weight:bold;white-space:pre;line-height:normal;transform:scaleX(0.967);transform-origin:0 0;">Obroty [obr/min]</div>
<div class="a" style="left:1437.5px;top:403.8px;font-size:13px;color:#d01818;white-space:pre;line-height:normal;transform:scaleX(1.108);transform-origin:0 0;-webkit-text-stroke:.45px #d01818;">RPM</div>
<div class="cb" style="left:1520px;top:405px"><svg width="13" height="13" viewBox="0 0 13 13"><path d="M3 6 L5.5 8.5 L10 3.5" stroke="#000" stroke-width="2" fill="none"/></svg></div>
<div class="a" style="left:1560.0px;top:402.5px;font-size:16px;color:#000060;font-weight:bold;white-space:pre;line-height:normal;transform:scaleX(1.086);transform-origin:0 0;">900</div>
<div class="a" style="left:1431px;top:428px;width:167px;height:53px;border:1px solid #bdbdbd;box-shadow:1px 1px 0 #fff,inset 1px 1px 0 #fff"></div><div class="a" style="left:1436px;top:424px;width:86px;height:12px;background:#f0f0f0"></div><div class="a" style="left:1438.5px;top:424.3px;font-size:11px;color:#000;white-space:pre;line-height:normal;transform:scaleX(0.981);transform-origin:0 0;">Aktywne gazowe</div>
<svg style="left:0;top:0" width="1600" height="900" viewBox="0 0 1600 900">
<g transform="translate(1444.8,438.2)"><rect x="-1.3" y="0.5" width="3.4" height="4.5" fill="#f4f4f4" stroke="#555" stroke-width=".7"/><path d="M-7.5 6.3 L-4.5 4 V5 H4.5 V9 H-4.5 Z" fill="#3c3c3c"/><rect x="-4.3" y="9" width="8.8" height="7" fill="#12a030" stroke="#0a7a22" stroke-width=".7"/><rect x="-2.8" y="16.2" width="5.8" height="2.6" fill="#f4f4f4" stroke="#8a8a8a" stroke-width=".6"/><rect x="-1.8" y="19" width="3.8" height="1.4" fill="#9a9a9a"/><rect x="-2.6" y="21.3" width="5.4" height="1" fill="#7ccc8c" opacity=".8"/></g>
<g transform="translate(1464.76,438.2)"><rect x="-1.3" y="0.5" width="3.4" height="4.5" fill="#f4f4f4" stroke="#555" stroke-width=".7"/><path d="M-7.5 6.3 L-4.5 4 V5 H4.5 V9 H-4.5 Z" fill="#3c3c3c"/><rect x="-4.3" y="9" width="8.8" height="7" fill="#12a030" stroke="#0a7a22" stroke-width=".7"/><rect x="-2.8" y="16.2" width="5.8" height="2.6" fill="#f4f4f4" stroke="#8a8a8a" stroke-width=".6"/><rect x="-1.8" y="19" width="3.8" height="1.4" fill="#9a9a9a"/><rect x="-2.6" y="21.3" width="5.4" height="1" fill="#7ccc8c" opacity=".8"/></g>
<g transform="translate(1484.72,438.2)"><rect x="-1.3" y="0.5" width="3.4" height="4.5" fill="#f4f4f4" stroke="#555" stroke-width=".7"/><path d="M-7.5 6.3 L-4.5 4 V5 H4.5 V9 H-4.5 Z" fill="#3c3c3c"/><rect x="-4.3" y="9" width="8.8" height="7" fill="#12a030" stroke="#0a7a22" stroke-width=".7"/><rect x="-2.8" y="16.2" width="5.8" height="2.6" fill="#f4f4f4" stroke="#8a8a8a" stroke-width=".6"/><rect x="-1.8" y="19" width="3.8" height="1.4" fill="#9a9a9a"/><rect x="-2.6" y="21.3" width="5.4" height="1" fill="#7ccc8c" opacity=".8"/></g>
<g transform="translate(1504.68,438.2)"><rect x="-1.3" y="0.5" width="3.4" height="4.5" fill="#f4f4f4" stroke="#555" stroke-width=".7"/><path d="M-7.5 6.3 L-4.5 4 V5 H4.5 V9 H-4.5 Z" fill="#3c3c3c"/><rect x="-4.3" y="9" width="8.8" height="7" fill="#12a030" stroke="#0a7a22" stroke-width=".7"/><rect x="-2.8" y="16.2" width="5.8" height="2.6" fill="#f4f4f4" stroke="#8a8a8a" stroke-width=".6"/><rect x="-1.8" y="19" width="3.8" height="1.4" fill="#9a9a9a"/><rect x="-2.6" y="21.3" width="5.4" height="1" fill="#7ccc8c" opacity=".8"/></g>
<g transform="translate(1524.6399999999999,438.2)"><rect x="-1.3" y="0.5" width="3.4" height="4.5" fill="#f4f4f4" stroke="#555" stroke-width=".7"/><path d="M-7.5 6.3 L-4.5 4 V5 H4.5 V9 H-4.5 Z" fill="#3c3c3c"/><rect x="-4.3" y="9" width="8.8" height="7" fill="#dcf4ea" stroke="#98b4a6" stroke-width=".7"/><path d="M-4.3 12.8 H4.5" stroke="#98b4a6" stroke-width=".7"/><rect x="-2.8" y="16.2" width="5.8" height="2.6" fill="#f4f4f4" stroke="#8a8a8a" stroke-width=".6"/><rect x="-1.8" y="19" width="3.8" height="1.4" fill="#9a9a9a"/></g>
<g transform="translate(1544.6,438.2)"><rect x="-1.3" y="0.5" width="3.4" height="4.5" fill="#f4f4f4" stroke="#555" stroke-width=".7"/><path d="M-7.5 6.3 L-4.5 4 V5 H4.5 V9 H-4.5 Z" fill="#3c3c3c"/><rect x="-4.3" y="9" width="8.8" height="7" fill="#dcf4ea" stroke="#98b4a6" stroke-width=".7"/><path d="M-4.3 12.8 H4.5" stroke="#98b4a6" stroke-width=".7"/><rect x="-2.8" y="16.2" width="5.8" height="2.6" fill="#f4f4f4" stroke="#8a8a8a" stroke-width=".6"/><rect x="-1.8" y="19" width="3.8" height="1.4" fill="#9a9a9a"/></g>
<g transform="translate(1564.56,438.2)"><rect x="-1.3" y="0.5" width="3.4" height="4.5" fill="#f4f4f4" stroke="#555" stroke-width=".7"/><path d="M-7.5 6.3 L-4.5 4 V5 H4.5 V9 H-4.5 Z" fill="#3c3c3c"/><rect x="-4.3" y="9" width="8.8" height="7" fill="#dcf4ea" stroke="#98b4a6" stroke-width=".7"/><path d="M-4.3 12.8 H4.5" stroke="#98b4a6" stroke-width=".7"/><rect x="-2.8" y="16.2" width="5.8" height="2.6" fill="#f4f4f4" stroke="#8a8a8a" stroke-width=".6"/><rect x="-1.8" y="19" width="3.8" height="1.4" fill="#9a9a9a"/></g>
<g transform="translate(1584.52,438.2)"><rect x="-1.3" y="0.5" width="3.4" height="4.5" fill="#f4f4f4" stroke="#555" stroke-width=".7"/><path d="M-7.5 6.3 L-4.5 4 V5 H4.5 V9 H-4.5 Z" fill="#3c3c3c"/><rect x="-4.3" y="9" width="8.8" height="7" fill="#dcf4ea" stroke="#98b4a6" stroke-width=".7"/><path d="M-4.3 12.8 H4.5" stroke="#98b4a6" stroke-width=".7"/><rect x="-2.8" y="16.2" width="5.8" height="2.6" fill="#f4f4f4" stroke="#8a8a8a" stroke-width=".6"/><rect x="-1.8" y="19" width="3.8" height="1.4" fill="#9a9a9a"/></g>
</svg>
<div class="a" style="left:1438.8px;top:462.8px;width:12px;text-align:center;font-size:11px;font-weight:bold;line-height:normal">1</div>
<div class="a" style="left:1458.8px;top:462.8px;width:12px;text-align:center;font-size:11px;font-weight:bold;line-height:normal">2</div>
<div class="a" style="left:1478.7px;top:462.8px;width:12px;text-align:center;font-size:11px;font-weight:bold;line-height:normal">3</div>
<div class="a" style="left:1498.7px;top:462.8px;width:12px;text-align:center;font-size:11px;font-weight:bold;line-height:normal">4</div>
<div class="a" style="left:1518.6px;top:462.8px;width:12px;text-align:center;font-size:11px;font-weight:bold;line-height:normal">5</div>
<div class="a" style="left:1538.6px;top:462.8px;width:12px;text-align:center;font-size:11px;font-weight:bold;line-height:normal">6</div>
<div class="a" style="left:1558.6px;top:462.8px;width:12px;text-align:center;font-size:11px;font-weight:bold;line-height:normal">7</div>
<div class="a" style="left:1578.5px;top:462.8px;width:12px;text-align:center;font-size:11px;font-weight:bold;line-height:normal">8</div>
<!-- i button + tabs -->
<div class="btn" style="left:1393px;top:44px;width:33px;height:28px"></div>
<svg style="left:1403px;top:48px" width="14" height="20" viewBox="0 0 14 20"><circle cx="8.3" cy="3.2" r="1.9" fill="#30d8e0" stroke="#103038" stroke-width="1"/><path d="M3.2 8.2 L7.6 6.6 L9.6 7.6 L7.2 14.2 L9.4 13.6 L10 15 L5.4 17.4 L3.6 16.4 L6 9.8 L4 10.2 Z" fill="#30d8e0" stroke="#103038" stroke-width="1" stroke-linejoin="round"/></svg>
<div class="a" style="left:1403px;top:78px;width:22px;height:1px;background:#fff"></div>
<div class="a" style="left:1425px;top:79px;width:2px;height:50px;background:linear-gradient(90deg,#6e6e6e 0,#6e6e6e 50%,#a6a6a6 50%)"></div>
<div class="a" style="left:1403px;top:129px;width:21px;height:69px;border:1px solid #6e6e6e;border-radius:3px 3px 0 0;border-right-width:2px;border-bottom-width:2px;border-right-color:#787878;border-bottom-color:#787878;box-shadow:inset 1px 1px 0 #fff"></div>
<div class="a" style="left:1415px;top:102px;width:0;height:0"><div class="a" style="left:-30px;top:-8px;width:60px;height:16px;text-align:center;font-size:12px;font-weight:bold;line-height:16px;transform:rotate(90deg);white-space:pre;-webkit-text-stroke:.35px #000">Mapa</div></div>
<div class="a" style="left:1413.5px;top:163px;width:0;height:0"><div class="a" style="left:-40px;top:-8px;width:80px;height:16px;text-align:center;font-size:12px;font-weight:bold;line-height:16px;transform:rotate(90deg) scaleX(1.06);white-space:pre;-webkit-text-stroke:.35px #000">Odchyłka</div></div>
<!-- lower chart -->
<div class="a" style="left:3.4px;top:437px;width:1422.8px;height:402px;background:#fff"></div>
<svg style="left:0;top:0" width="1600" height="900" viewBox="0 0 1600 900">
<path d="M54.5 459 V815 M89.5 459 V815 M124.5 459 V815 M159.5 459 V815 M194.5 459 V815 M229.5 459 V815 M263.5 459 V815 M298.5 459 V815 M333.5 459 V815 M368.5 459 V815 M403.5 459 V815 M437.5 459 V815 M472.5 459 V815 M507.5 459 V815 M542.5 459 V815 M577.5 459 V815 M611.5 459 V815 M646.5 459 V815 M681.5 459 V815 M716.5 459 V815 M751.5 459 V815 M786.5 459 V815 M820.5 459 V815 M855.5 459 V815 M890.5 459 V815 M925.5 459 V815 M960.5 459 V815 M994.5 459 V815 M1029.5 459 V815 M1064.5 459 V815 M1099.5 459 V815 M1134.5 459 V815 M1169.5 459 V815 M1203.5 459 V815 M1238.5 459 V815 M1273.5 459 V815 M1308.5 459 V815 M1343.5 459 V815 M1377.5 459 V815 M21 745.5 H1412 M21 673.5 H1412 M21 601.5 H1412 M21 530.5 H1412" stroke="#d0d0d0" stroke-width="1" stroke-dasharray="3 3" fill="none" shape-rendering="crispEdges"/>
<polyline points="19.5,561.5 26.5,561.5 33.5,561.5 40.5,561.5 47.5,561.5 54.5,561.5 61.5,561.5 68.5,561.5 75.5,561.5 82.5,561.5 89.5,561.5 96.5,561.5 103.5,558.5 110.5,561.5 117.5,561.5 124.5,561.5 131.5,558.5 137.5,561.5 144.5,561.5 151.5,558.5 158.5,561.5 165.5,558.5 172.5,561.5 179.5,561.5 186.5,561.5 193.5,561.5 200.5,558.5 207.5,558.5 214.5,558.5 221.5,558.5 228.5,561.5 235.5,561.5 242.5,561.5 249.5,558.5 256.5,561.5 263.5,561.5 270.5,561.5 277.5,561.5 284.5,558.5 291.5,558.5 298.5,558.5 305.5,561.5 312.5,561.5 319.5,558.5 325.5,558.5 332.5,558.5 339.5,561.5 346.5,561.5 353.5,558.5 360.5,558.5 367.5,558.5 374.5,558.5 381.5,558.5 388.5,558.5 395.5,558.5 402.5,558.5 409.5,558.5 416.5,561.5 423.5,561.5 430.5,554.5 437.5,558.5 444.5,558.5 451.5,561.5 458.5,558.5 465.5,558.5 472.5,558.5 479.5,558.5 486.5,558.5 493.5,558.5 500.5,558.5 507.5,558.5 514.5,558.5 520.5,558.5 527.5,558.5 534.5,558.5 541.5,558.5 548.5,558.5 555.5,554.5 562.5,558.5 569.5,558.5 576.5,554.5 583.5,558.5 590.5,558.5 597.5,558.5 604.5,558.5 611.5,558.5 618.5,558.5 625.5,554.5 632.5,558.5 639.5,558.5 646.5,558.5 653.5,558.5 660.5,558.5 667.5,558.5 674.5,558.5 681.5,558.5 688.5,558.5 695.5,558.5 702.5,558.5 708.5,558.5 715.5,558.5 722.5,558.5 729.5,558.5 736.5,558.5 743.5,558.5 750.5,558.5 757.5,558.5 764.5,558.5 771.5,558.5 778.5,558.5 785.5,558.5 792.5,558.5 799.5,558.5 806.5,558.5 813.5,558.5 820.5,554.5 827.5,558.5 834.5,558.5 841.5,558.5 848.5,558.5 855.5,558.5 862.5,558.5 869.5,558.5 876.5,558.5 883.5,558.5 890.5,558.5 897.5,554.5 903.5,558.5 910.5,558.5 917.5,558.5 924.5,558.5 931.5,558.5 938.5,558.5 945.5,558.5 952.5,558.5 959.5,558.5 966.5,558.5 973.5,558.5 980.5,558.5 987.5,558.5 994.5,558.5 1001.5,558.5 1008.5,558.5 1015.5,558.5 1022.5,558.5 1029.5,558.5 1036.5,558.5 1043.5,558.5 1050.5,558.5 1057.5,558.5 1064.5,558.5 1071.5,558.5 1078.5,558.5 1085.5,558.5 1091.5,558.5 1098.5,558.5 1105.5,558.5 1112.5,558.5 1119.5,558.5 1126.5,558.5 1133.5,558.5 1140.5,554.5 1147.5,558.5 1154.5,558.5 1161.5,558.5 1168.5,558.5 1175.5,558.5 1182.5,554.5 1189.5,558.5 1196.5,558.5 1203.5,558.5 1210.5,558.5 1217.5,558.5 1224.5,554.5 1231.5,558.5 1238.5,554.5 1245.5,554.5 1252.5,554.5 1259.5,554.5 1266.5,554.5 1273.5,558.5 1279.5,554.5 1286.5,554.5 1293.5,558.5 1300.5,558.5 1307.5,558.5 1314.5,554.5 1321.5,558.5 1328.5,554.5 1335.5,558.5 1342.5,558.5 1349.5,558.5 1356.5,558.5 1363.5,558.5 1370.5,558.5 1377.5,558.5 1384.5,558.5 1391.5,558.5 1398.5,558.5 1405.5,558.5 1412.5,558.5" stroke="#dba254" stroke-width="1.15" fill="none" stroke-linejoin="round"/>
<polyline points="19.5,676.5 26.5,676.5 33.5,676.5 40.5,676.5 47.5,676.5 54.5,676.5 61.5,676.5 68.5,676.5 75.5,676.5 82.5,676.5 89.5,676.5 96.5,676.5 103.5,676.5 110.5,676.5 117.5,676.5 124.5,676.5 131.5,676.5 137.5,676.5 144.5,676.5 151.5,676.5 158.5,676.5 165.5,673.5 172.5,676.5 179.5,676.5 186.5,676.5 193.5,676.5 200.5,673.5 207.5,673.5 214.5,673.5 221.5,673.5 228.5,676.5 235.5,676.5 242.5,676.5 249.5,676.5 256.5,673.5 263.5,676.5 270.5,676.5 277.5,676.5 284.5,673.5 291.5,673.5 298.5,673.5 305.5,676.5 312.5,676.5 319.5,673.5 325.5,673.5 332.5,673.5 339.5,676.5 346.5,676.5 353.5,673.5 360.5,673.5 367.5,673.5 374.5,673.5 381.5,673.5 388.5,673.5 395.5,673.5 402.5,673.5 409.5,673.5 416.5,673.5 423.5,673.5 430.5,673.5 437.5,673.5 444.5,673.5 451.5,673.5 458.5,673.5 465.5,673.5 472.5,673.5 479.5,673.5 486.5,673.5 493.5,673.5 500.5,673.5 507.5,673.5 514.5,673.5 520.5,673.5 527.5,673.5 534.5,673.5 541.5,673.5 548.5,673.5 555.5,673.5 562.5,673.5 569.5,673.5 576.5,669.5 583.5,673.5 590.5,673.5 597.5,673.5 604.5,673.5 611.5,673.5 618.5,673.5 625.5,669.5 632.5,673.5 639.5,673.5 646.5,673.5 653.5,673.5 660.5,673.5 667.5,673.5 674.5,673.5 681.5,673.5 688.5,673.5 695.5,673.5 702.5,669.5 708.5,673.5 715.5,673.5 722.5,673.5 729.5,673.5 736.5,673.5 743.5,673.5 750.5,673.5 757.5,673.5 764.5,673.5 771.5,673.5 778.5,673.5 785.5,673.5 792.5,673.5 799.5,673.5 806.5,673.5 813.5,673.5 820.5,669.5 827.5,673.5 834.5,673.5 841.5,673.5 848.5,673.5 855.5,673.5 862.5,673.5 869.5,673.5 876.5,669.5 883.5,673.5 890.5,669.5 897.5,669.5 903.5,673.5 910.5,673.5 917.5,673.5 924.5,673.5 931.5,673.5 938.5,673.5 945.5,673.5 952.5,673.5 959.5,669.5 966.5,669.5 973.5,669.5 980.5,673.5 987.5,673.5 994.5,673.5 1001.5,673.5 1008.5,673.5 1015.5,673.5 1022.5,673.5 1029.5,673.5 1036.5,673.5 1043.5,673.5 1050.5,673.5 1057.5,673.5 1064.5,673.5 1071.5,669.5 1078.5,669.5 1085.5,669.5 1091.5,669.5 1098.5,673.5 1105.5,669.5 1112.5,669.5 1119.5,669.5 1126.5,669.5 1133.5,669.5 1140.5,669.5 1147.5,669.5 1154.5,669.5 1161.5,669.5 1168.5,669.5 1175.5,669.5 1182.5,669.5 1189.5,669.5 1196.5,669.5 1203.5,669.5 1210.5,669.5 1217.5,669.5 1224.5,669.5 1231.5,669.5 1238.5,665.5 1245.5,669.5 1252.5,665.5 1259.5,669.5 1266.5,665.5 1273.5,669.5 1279.5,665.5 1286.5,665.5 1293.5,669.5 1300.5,669.5 1307.5,669.5 1314.5,669.5 1321.5,669.5 1328.5,669.5 1335.5,669.5 1342.5,669.5 1349.5,669.5 1356.5,669.5 1363.5,669.5 1370.5,669.5 1377.5,669.5 1384.5,669.5 1391.5,669.5 1398.5,669.5 1405.5,669.5 1412.5,669.5" stroke="#4a1a1a" stroke-width="1.15" fill="none" stroke-linejoin="round"/>
<polyline points="19.5,718.5 26.5,718.5 33.5,718.5 40.5,718.5 47.5,718.5 54.5,718.5 61.5,717.5 68.5,717.5 75.5,717.5 82.5,718.5 89.5,719.5 96.5,719.5 103.5,719.5 110.5,719.5 117.5,719.5 124.5,719.5 131.5,719.5 137.5,719.5 144.5,719.5 151.5,718.5 158.5,718.5 165.5,718.5 172.5,718.5 179.5,718.5 186.5,718.5 193.5,718.5 200.5,718.5 207.5,718.5 214.5,719.5 221.5,719.5 228.5,718.5 235.5,718.5 242.5,719.5 249.5,719.5 256.5,719.5 263.5,719.5 270.5,719.5 277.5,719.5 284.5,718.5 291.5,718.5 298.5,717.5 305.5,717.5 312.5,717.5 319.5,718.5 325.5,718.5 332.5,719.5 339.5,719.5 346.5,719.5 353.5,719.5 360.5,718.5 367.5,718.5 374.5,717.5 381.5,717.5 388.5,718.5 395.5,718.5 402.5,718.5 409.5,718.5 416.5,718.5 423.5,718.5 430.5,718.5 437.5,718.5 444.5,718.5 451.5,718.5 458.5,718.5 465.5,718.5 472.5,718.5 479.5,718.5 486.5,718.5 493.5,718.5 500.5,718.5 507.5,718.5 514.5,718.5 520.5,718.5 527.5,718.5 534.5,718.5 541.5,718.5 548.5,718.5 555.5,718.5 562.5,718.5 569.5,718.5 576.5,718.5 583.5,718.5 590.5,718.5 597.5,718.5 604.5,718.5 611.5,718.5 618.5,718.5 625.5,718.5 632.5,719.5 639.5,719.5 646.5,719.5 653.5,717.5 660.5,717.5 667.5,718.5 674.5,718.5 681.5,718.5 688.5,717.5 695.5,717.5 702.5,717.5 708.5,717.5 715.5,718.5 722.5,718.5 729.5,717.5 736.5,717.5 743.5,718.5 750.5,718.5 757.5,718.5 764.5,718.5 771.5,718.5 778.5,718.5 785.5,718.5 792.5,718.5 799.5,719.5 806.5,719.5 813.5,719.5 820.5,719.5 827.5,719.5 834.5,719.5 841.5,719.5 848.5,719.5 855.5,719.5 862.5,718.5 869.5,718.5 876.5,718.5 883.5,718.5 890.5,718.5 897.5,718.5 903.5,718.5 910.5,718.5 917.5,718.5 924.5,718.5 931.5,718.5 938.5,718.5 945.5,718.5 952.5,718.5 959.5,718.5 966.5,718.5 973.5,718.5 980.5,718.5 987.5,718.5 994.5,719.5 1001.5,719.5 1008.5,719.5 1015.5,719.5 1022.5,719.5 1029.5,719.5 1036.5,719.5 1043.5,719.5 1050.5,719.5 1057.5,719.5 1064.5,719.5 1071.5,719.5 1078.5,719.5 1085.5,719.5 1091.5,719.5 1098.5,719.5 1105.5,719.5 1112.5,719.5 1119.5,718.5 1126.5,718.5 1133.5,718.5 1140.5,717.5 1147.5,717.5 1154.5,717.5 1161.5,717.5 1168.5,717.5 1175.5,717.5 1182.5,717.5 1189.5,718.5 1196.5,718.5 1203.5,718.5 1210.5,718.5 1217.5,718.5 1224.5,718.5 1231.5,718.5 1238.5,718.5 1245.5,718.5 1252.5,718.5 1259.5,717.5 1266.5,718.5 1273.5,718.5 1279.5,718.5 1286.5,718.5 1293.5,718.5 1300.5,718.5 1307.5,718.5 1314.5,718.5 1321.5,719.5 1328.5,719.5 1335.5,719.5 1342.5,718.5 1349.5,719.5 1356.5,719.5 1363.5,719.5 1370.5,718.5 1377.5,718.5 1384.5,718.5 1391.5,718.5 1398.5,719.5 1405.5,719.5 1412.5,719.5" stroke="#a3a040" stroke-width="1.15" fill="none" stroke-linejoin="round"/>
<polyline points="19.5,732.5 26.5,732.5 33.5,733.5 40.5,733.5 47.5,731.5 54.5,731.5 61.5,733.5 68.5,733.5 75.5,733.5 82.5,733.5 89.5,732.5 96.5,732.5 103.5,732.5 110.5,732.5 117.5,733.5 124.5,733.5 131.5,731.5 137.5,731.5 144.5,733.5 151.5,733.5 158.5,732.5 165.5,732.5 172.5,732.5 179.5,732.5 186.5,731.5 193.5,731.5 200.5,733.5 207.5,733.5 214.5,733.5 221.5,733.5 228.5,733.5 235.5,733.5 242.5,732.5 249.5,732.5 256.5,732.5 263.5,732.5 270.5,732.5 277.5,732.5 284.5,731.5 291.5,731.5 298.5,732.5 305.5,732.5 312.5,732.5 319.5,732.5 325.5,732.5 332.5,732.5 339.5,733.5 346.5,733.5 353.5,732.5 360.5,732.5 367.5,731.5 374.5,731.5 381.5,733.5 388.5,733.5 395.5,733.5 402.5,733.5 409.5,732.5 416.5,732.5 423.5,731.5 430.5,731.5 437.5,732.5 444.5,732.5 451.5,733.5 458.5,733.5 465.5,732.5 472.5,732.5 479.5,732.5 486.5,732.5 493.5,733.5 500.5,733.5 507.5,731.5 514.5,731.5 520.5,733.5 527.5,733.5 534.5,732.5 541.5,732.5 548.5,732.5 555.5,732.5 562.5,732.5 569.5,732.5 576.5,731.5 583.5,731.5 590.5,732.5 597.5,732.5 604.5,732.5 611.5,732.5 618.5,732.5 625.5,732.5 632.5,732.5 639.5,732.5 646.5,731.5 653.5,731.5 660.5,733.5 667.5,733.5 674.5,733.5 681.5,733.5 688.5,731.5 695.5,731.5 702.5,731.5 708.5,731.5 715.5,731.5 722.5,731.5 729.5,733.5 736.5,733.5 743.5,733.5 750.5,733.5 757.5,733.5 764.5,733.5 771.5,732.5 778.5,732.5 785.5,733.5 792.5,733.5 799.5,732.5 806.5,732.5 813.5,732.5 820.5,732.5 827.5,732.5 834.5,732.5 841.5,732.5 848.5,732.5 855.5,731.5 862.5,731.5 869.5,733.5 876.5,733.5 883.5,732.5 890.5,732.5 897.5,732.5 903.5,732.5 910.5,733.5 917.5,733.5 924.5,733.5 931.5,733.5 938.5,732.5 945.5,732.5 952.5,732.5 959.5,732.5 966.5,732.5 973.5,732.5 980.5,732.5 987.5,732.5 994.5,732.5 1001.5,732.5 1008.5,732.5 1015.5,732.5 1022.5,733.5 1029.5,733.5 1036.5,733.5 1043.5,733.5 1050.5,733.5 1057.5,733.5 1064.5,732.5 1071.5,732.5 1078.5,733.5 1085.5,733.5 1091.5,733.5 1098.5,733.5 1105.5,732.5 1112.5,732.5 1119.5,732.5 1126.5,732.5 1133.5,731.5 1140.5,731.5 1147.5,733.5 1154.5,733.5 1161.5,732.5 1168.5,732.5 1175.5,733.5 1182.5,733.5 1189.5,732.5 1196.5,732.5 1203.5,731.5 1210.5,731.5 1217.5,732.5 1224.5,732.5 1231.5,731.5 1238.5,731.5 1245.5,731.5 1252.5,731.5 1259.5,732.5 1266.5,732.5 1273.5,732.5 1279.5,732.5 1286.5,732.5 1293.5,732.5 1300.5,731.5 1307.5,731.5 1314.5,733.5 1321.5,733.5 1328.5,733.5 1335.5,733.5 1342.5,732.5 1349.5,732.5 1356.5,732.5 1363.5,732.5 1370.5,732.5 1377.5,732.5 1384.5,732.5 1391.5,732.5 1398.5,731.5 1405.5,731.5 1412.5,732.5" stroke="#2f7d35" stroke-width="1.15" fill="none" stroke-linejoin="round"/>
<polyline points="19.5,752.5 26.5,752.5 33.5,752.5 40.5,752.5 47.5,752.5 54.5,752.5 61.5,752.5 68.5,752.5 75.5,752.5 82.5,752.5 89.5,752.5 96.5,752.5 103.5,752.5 110.5,752.5 117.5,752.5 124.5,752.5 131.5,752.5 137.5,752.5 144.5,752.5 151.5,752.5 158.5,752.5 165.5,752.5 172.5,752.5 179.5,752.5 186.5,752.5 193.5,752.5 200.5,752.5 207.5,752.5 214.5,752.5 221.5,752.5 228.5,752.5 235.5,752.5 242.5,752.5 249.5,752.5 256.5,752.5 263.5,752.5 270.5,752.5 277.5,752.5 284.5,752.5 291.5,752.5 298.5,752.5 305.5,752.5 312.5,752.5 319.5,752.5 325.5,752.5 332.5,752.5 339.5,752.5 346.5,752.5 353.5,752.5 360.5,752.5 367.5,752.5 374.5,752.5 381.5,752.5 388.5,752.5 395.5,752.5 402.5,752.5 409.5,752.5 416.5,752.5 423.5,752.5 430.5,752.5 437.5,752.5 444.5,752.5 451.5,752.5 458.5,752.5 465.5,752.5 472.5,752.5 479.5,759.5 486.5,759.5 493.5,752.5 500.5,752.5 507.5,752.5 514.5,752.5 520.5,752.5 527.5,752.5 534.5,752.5 541.5,752.5 548.5,752.5 555.5,752.5 562.5,752.5 569.5,752.5 576.5,752.5 583.5,752.5 590.5,752.5 597.5,752.5 604.5,752.5 611.5,752.5 618.5,752.5 625.5,752.5 632.5,752.5 639.5,752.5 646.5,752.5 653.5,752.5 660.5,752.5 667.5,752.5 674.5,752.5 681.5,752.5 688.5,752.5 695.5,752.5 702.5,752.5 708.5,752.5 715.5,752.5 722.5,752.5 729.5,752.5 736.5,752.5 743.5,752.5 750.5,752.5 757.5,752.5 764.5,752.5 771.5,752.5 778.5,752.5 785.5,752.5 792.5,752.5 799.5,752.5 806.5,752.5 813.5,752.5 820.5,752.5 827.5,752.5 834.5,752.5 841.5,752.5 848.5,752.5 855.5,752.5 862.5,752.5 869.5,752.5 876.5,752.5 883.5,752.5 890.5,752.5 897.5,752.5 903.5,752.5 910.5,752.5 917.5,752.5 924.5,752.5 931.5,752.5 938.5,752.5 945.5,752.5 952.5,752.5 959.5,752.5 966.5,752.5 973.5,752.5 980.5,752.5 987.5,752.5 994.5,752.5 1001.5,752.5 1008.5,752.5 1015.5,752.5 1022.5,752.5 1029.5,752.5 1036.5,752.5 1043.5,752.5 1050.5,752.5 1057.5,752.5 1064.5,752.5 1071.5,752.5 1078.5,752.5 1085.5,752.5 1091.5,752.5 1098.5,752.5 1105.5,752.5 1112.5,752.5 1119.5,752.5 1126.5,752.5 1133.5,759.5 1140.5,759.5 1147.5,752.5 1154.5,752.5 1161.5,752.5 1168.5,752.5 1175.5,752.5 1182.5,752.5 1189.5,752.5 1196.5,752.5 1203.5,752.5 1210.5,752.5 1217.5,752.5 1224.5,752.5 1231.5,752.5 1238.5,752.5 1245.5,752.5 1252.5,752.5 1259.5,752.5 1266.5,752.5 1273.5,752.5 1279.5,752.5 1286.5,752.5 1293.5,752.5 1300.5,752.5 1307.5,752.5 1314.5,752.5 1321.5,752.5 1328.5,752.5 1335.5,752.5 1342.5,752.5 1349.5,752.5 1356.5,752.5 1363.5,752.5 1370.5,752.5 1377.5,752.5 1384.5,752.5 1391.5,752.5 1398.5,752.5 1405.5,752.5 1412.5,752.5" stroke="#a83030" stroke-width="1.15" fill="none" stroke-linejoin="round"/>
<polyline points="19.5,790.5 26.5,790.5 33.5,790.5 40.5,790.5 47.5,789.5 54.5,789.5 61.5,789.5 68.5,789.5 75.5,790.5 82.5,790.5 89.5,790.5 96.5,790.5 103.5,791.5 110.5,791.5 117.5,791.5 124.5,791.5 131.5,791.5 137.5,791.5 144.5,791.5 151.5,791.5 158.5,791.5 165.5,791.5 172.5,789.5 179.5,789.5 186.5,789.5 193.5,789.5 200.5,789.5 207.5,789.5 214.5,789.5 221.5,789.5 228.5,789.5 235.5,789.5 242.5,789.5 249.5,791.5 256.5,790.5 263.5,790.5 270.5,790.5 277.5,789.5 284.5,791.5 291.5,791.5 298.5,791.5 305.5,791.5 312.5,791.5 319.5,791.5 325.5,789.5 332.5,789.5 339.5,789.5 346.5,789.5 353.5,789.5 360.5,789.5 367.5,790.5 374.5,790.5 381.5,790.5 388.5,790.5 395.5,790.5 402.5,790.5 409.5,790.5 416.5,790.5 423.5,790.5 430.5,790.5 437.5,790.5 444.5,791.5 451.5,791.5 458.5,791.5 465.5,791.5 472.5,791.5 479.5,791.5 486.5,791.5 493.5,790.5 500.5,790.5 507.5,790.5 514.5,790.5 520.5,790.5 527.5,790.5 534.5,791.5 541.5,791.5 548.5,789.5 555.5,790.5 562.5,790.5 569.5,790.5 576.5,790.5 583.5,790.5 590.5,791.5 597.5,789.5 604.5,791.5 611.5,789.5 618.5,789.5 625.5,789.5 632.5,790.5 639.5,791.5 646.5,791.5 653.5,789.5 660.5,789.5 667.5,789.5 674.5,789.5 681.5,789.5 688.5,791.5 695.5,791.5 702.5,791.5 708.5,791.5 715.5,791.5 722.5,791.5 729.5,791.5 736.5,791.5 743.5,791.5 750.5,791.5 757.5,791.5 764.5,791.5 771.5,791.5 778.5,791.5 785.5,791.5 792.5,791.5 799.5,791.5 806.5,791.5 813.5,791.5 820.5,791.5 827.5,791.5 834.5,791.5 841.5,791.5 848.5,790.5 855.5,791.5 862.5,790.5 869.5,790.5 876.5,790.5 883.5,790.5 890.5,790.5 897.5,790.5 903.5,789.5 910.5,789.5 917.5,789.5 924.5,789.5 931.5,789.5 938.5,789.5 945.5,789.5 952.5,789.5 959.5,789.5 966.5,791.5 973.5,791.5 980.5,789.5 987.5,789.5 994.5,789.5 1001.5,789.5 1008.5,790.5 1015.5,790.5 1022.5,790.5 1029.5,790.5 1036.5,790.5 1043.5,790.5 1050.5,790.5 1057.5,790.5 1064.5,790.5 1071.5,791.5 1078.5,791.5 1085.5,791.5 1091.5,791.5 1098.5,791.5 1105.5,791.5 1112.5,791.5 1119.5,791.5 1126.5,791.5 1133.5,791.5 1140.5,789.5 1147.5,789.5 1154.5,789.5 1161.5,790.5 1168.5,790.5 1175.5,790.5 1182.5,790.5 1189.5,790.5 1196.5,790.5 1203.5,790.5 1210.5,790.5 1217.5,790.5 1224.5,790.5 1231.5,790.5 1238.5,790.5 1245.5,790.5 1252.5,790.5 1259.5,790.5 1266.5,791.5 1273.5,791.5 1279.5,791.5 1286.5,791.5 1293.5,791.5 1300.5,791.5 1307.5,791.5 1314.5,789.5 1321.5,789.5 1328.5,791.5 1335.5,791.5 1342.5,790.5 1349.5,790.5 1356.5,790.5 1363.5,790.5 1370.5,789.5 1377.5,789.5 1384.5,789.5 1391.5,789.5 1398.5,790.5 1405.5,790.5 1412.5,791.5" stroke="#8c8c2c" stroke-width="1.15" fill="none" stroke-linejoin="round"/>
<polyline points="19.5,793.5 26.5,793.5 33.5,793.5 40.5,793.5 47.5,794.5 54.5,794.5 61.5,794.5 68.5,794.5 75.5,793.5 82.5,793.5 89.5,793.5 96.5,793.5 103.5,793.5 110.5,793.5 117.5,793.5 124.5,793.5 131.5,794.5 137.5,794.5 144.5,794.5 151.5,794.5 158.5,794.5 165.5,794.5 172.5,794.5 179.5,794.5 186.5,794.5 193.5,794.5 200.5,794.5 207.5,794.5 214.5,793.5 221.5,793.5 228.5,793.5 235.5,793.5 242.5,793.5 249.5,793.5 256.5,793.5 263.5,793.5 270.5,793.5 277.5,793.5 284.5,793.5 291.5,793.5 298.5,794.5 305.5,794.5 312.5,794.5 319.5,794.5 325.5,794.5 332.5,794.5 339.5,794.5 346.5,794.5 353.5,794.5 360.5,794.5 367.5,794.5 374.5,794.5 381.5,794.5 388.5,794.5 395.5,794.5 402.5,794.5 409.5,794.5 416.5,794.5 423.5,794.5 430.5,794.5 437.5,793.5 444.5,793.5 451.5,793.5 458.5,793.5 465.5,794.5 472.5,794.5 479.5,794.5 486.5,794.5 493.5,795.5 500.5,795.5 507.5,795.5 514.5,795.5 520.5,795.5 527.5,795.5 534.5,795.5 541.5,795.5 548.5,795.5 555.5,795.5 562.5,795.5 569.5,795.5 576.5,794.5 583.5,794.5 590.5,794.5 597.5,794.5 604.5,794.5 611.5,794.5 618.5,794.5 625.5,794.5 632.5,794.5 639.5,794.5 646.5,794.5 653.5,794.5 660.5,795.5 667.5,795.5 674.5,795.5 681.5,795.5 688.5,793.5 695.5,793.5 702.5,793.5 708.5,793.5 715.5,795.5 722.5,795.5 729.5,795.5 736.5,795.5 743.5,795.5 750.5,795.5 757.5,795.5 764.5,795.5 771.5,794.5 778.5,794.5 785.5,794.5 792.5,794.5 799.5,793.5 806.5,793.5 813.5,793.5 820.5,793.5 827.5,794.5 834.5,794.5 841.5,794.5 848.5,794.5 855.5,795.5 862.5,795.5 869.5,795.5 876.5,795.5 883.5,795.5 890.5,795.5 897.5,795.5 903.5,795.5 910.5,794.5 917.5,794.5 924.5,794.5 931.5,794.5 938.5,793.5 945.5,793.5 952.5,793.5 959.5,793.5 966.5,794.5 973.5,794.5 980.5,794.5 987.5,794.5 994.5,794.5 1001.5,794.5 1008.5,794.5 1015.5,794.5 1022.5,794.5 1029.5,794.5 1036.5,794.5 1043.5,794.5 1050.5,794.5 1057.5,794.5 1064.5,794.5 1071.5,794.5 1078.5,794.5 1085.5,794.5 1091.5,794.5 1098.5,794.5 1105.5,794.5 1112.5,794.5 1119.5,794.5 1126.5,794.5 1133.5,794.5 1140.5,794.5 1147.5,794.5 1154.5,794.5 1161.5,794.5 1168.5,794.5 1175.5,794.5 1182.5,794.5 1189.5,794.5 1196.5,794.5 1203.5,794.5 1210.5,794.5 1217.5,794.5 1224.5,794.5 1231.5,794.5 1238.5,794.5 1245.5,795.5 1252.5,795.5 1259.5,795.5 1266.5,795.5 1273.5,795.5 1279.5,795.5 1286.5,795.5 1293.5,795.5 1300.5,794.5 1307.5,794.5 1314.5,794.5 1321.5,794.5 1328.5,793.5 1335.5,793.5 1342.5,793.5 1349.5,793.5 1356.5,794.5 1363.5,794.5 1370.5,794.5 1377.5,794.5 1384.5,794.5 1391.5,794.5 1398.5,794.5 1405.5,794.5 1412.5,794.5" stroke="#1f7a22" stroke-width="1.15" fill="none" stroke-linejoin="round"/>
<polyline points="19.5,799.5 26.5,799.5 33.5,799.5 40.5,799.5 47.5,799.5 54.5,799.5 61.5,799.5 68.5,799.5 75.5,799.5 82.5,799.5 89.5,799.5 96.5,799.5 103.5,799.5 110.5,799.5 117.5,799.5 124.5,799.5 131.5,799.5 137.5,799.5 144.5,799.5 151.5,799.5 158.5,799.5 165.5,799.5 172.5,799.5 179.5,799.5 186.5,799.5 193.5,799.5 200.5,799.5 207.5,799.5 214.5,799.5 221.5,799.5 228.5,799.5 235.5,799.5 242.5,799.5 249.5,799.5 256.5,799.5 263.5,799.5 270.5,798.5 277.5,799.5 284.5,799.5 291.5,799.5 298.5,799.5 305.5,799.5 312.5,799.5 319.5,799.5 325.5,798.5 332.5,799.5 339.5,799.5 346.5,799.5 353.5,799.5 360.5,799.5 367.5,799.5 374.5,799.5 381.5,799.5 388.5,799.5 395.5,799.5 402.5,799.5 409.5,799.5 416.5,799.5 423.5,799.5 430.5,798.5 437.5,799.5 444.5,799.5 451.5,799.5 458.5,799.5 465.5,799.5 472.5,799.5 479.5,799.5 486.5,798.5 493.5,799.5 500.5,799.5 507.5,799.5 514.5,799.5 520.5,799.5 527.5,799.5 534.5,799.5 541.5,799.5 548.5,799.5 555.5,799.5 562.5,799.5 569.5,799.5 576.5,799.5 583.5,799.5 590.5,799.5 597.5,799.5 604.5,799.5 611.5,799.5 618.5,799.5 625.5,799.5 632.5,799.5 639.5,799.5 646.5,799.5 653.5,799.5 660.5,799.5 667.5,799.5 674.5,799.5 681.5,799.5 688.5,799.5 695.5,799.5 702.5,799.5 708.5,799.5 715.5,799.5 722.5,799.5 729.5,799.5 736.5,799.5 743.5,799.5 750.5,799.5 757.5,799.5 764.5,799.5 771.5,799.5 778.5,799.5 785.5,799.5 792.5,799.5 799.5,799.5 806.5,799.5 813.5,799.5 820.5,799.5 827.5,798.5 834.5,799.5 841.5,799.5 848.5,799.5 855.5,799.5 862.5,799.5 869.5,799.5 876.5,799.5 883.5,799.5 890.5,799.5 897.5,799.5 903.5,799.5 910.5,799.5 917.5,799.5 924.5,798.5 931.5,799.5 938.5,799.5 945.5,799.5 952.5,799.5 959.5,799.5 966.5,799.5 973.5,799.5 980.5,799.5 987.5,799.5 994.5,799.5 1001.5,799.5 1008.5,799.5 1015.5,799.5 1022.5,799.5 1029.5,799.5 1036.5,799.5 1043.5,799.5 1050.5,799.5 1057.5,799.5 1064.5,799.5 1071.5,799.5 1078.5,799.5 1085.5,799.5 1091.5,799.5 1098.5,799.5 1105.5,799.5 1112.5,799.5 1119.5,799.5 1126.5,799.5 1133.5,799.5 1140.5,799.5 1147.5,799.5 1154.5,799.5 1161.5,799.5 1168.5,799.5 1175.5,799.5 1182.5,799.5 1189.5,799.5 1196.5,799.5 1203.5,799.5 1210.5,799.5 1217.5,799.5 1224.5,799.5 1231.5,799.5 1238.5,799.5 1245.5,799.5 1252.5,799.5 1259.5,799.5 1266.5,799.5 1273.5,799.5 1279.5,799.5 1286.5,799.5 1293.5,799.5 1300.5,799.5 1307.5,799.5 1314.5,799.5 1321.5,799.5 1328.5,799.5 1335.5,799.5 1342.5,799.5 1349.5,799.5 1356.5,799.5 1363.5,799.5 1370.5,799.5 1377.5,799.5 1384.5,799.5 1391.5,799.5 1398.5,799.5 1405.5,799.5 1412.5,799.5" stroke="#000" stroke-width="1.1" fill="none" stroke-linejoin="round"/>
<polyline points="19.5,787.5 26.5,782.5 30.5,784.5 35.5,782.5 40.5,775.5 54.5,775.5 61.5,779.5 68.5,772.5 75.5,772.5 78.5,777.5 82.5,782.5 92.5,782.5 96.5,774.5 103.5,772.5 110.5,772.5 117.5,769.5 124.5,769.5 131.5,772.5 151.5,772.5 158.5,772.5 165.5,781.5 172.5,813.5 176.5,816.5 207.5,816.5 214.5,809.5 221.5,777.5 228.5,781.5 235.5,789.5 242.5,788.5 249.5,783.5 256.5,809.5 263.5,781.5 270.5,789.5 277.5,813.5 284.5,811.5 291.5,781.5 298.5,774.5 305.5,770.5 312.5,768.5 319.5,773.5 325.5,776.5 332.5,775.5 339.5,770.5 346.5,768.5 353.5,768.5 360.5,770.5 367.5,771.5 374.5,768.5 381.5,769.5 388.5,768.5 395.5,772.5 402.5,771.5 409.5,774.5 416.5,781.5 423.5,773.5 430.5,778.5 437.5,775.5 444.5,772.5 458.5,772.5 465.5,776.5 472.5,776.5 479.5,789.5 486.5,776.5 493.5,774.5 500.5,773.5 507.5,772.5 514.5,771.5 520.5,767.5 527.5,768.5 534.5,768.5 541.5,772.5 548.5,773.5 555.5,772.5 569.5,772.5 576.5,776.5 583.5,776.5 590.5,776.5 597.5,800.5 604.5,816.5 611.5,781.5 618.5,815.5 625.5,798.5 632.5,773.5 639.5,771.5 646.5,771.5 653.5,774.5 660.5,775.5 667.5,775.5 674.5,773.5 681.5,810.5 688.5,815.5 695.5,816.5 702.5,775.5 708.5,786.5 715.5,813.5 719.5,816.5 757.5,816.5 764.5,792.5 771.5,776.5 778.5,775.5 785.5,813.5 789.5,816.5 808.5,816.5 820.5,802.5 827.5,776.5 834.5,780.5 841.5,776.5 848.5,773.5 855.5,773.5 862.5,769.5 876.5,769.5 883.5,774.5 890.5,773.5 897.5,773.5 903.5,774.5 910.5,782.5 917.5,782.5 924.5,781.5 931.5,773.5 938.5,770.5 945.5,768.5 952.5,771.5 959.5,771.5 966.5,774.5 973.5,776.5 980.5,796.5 987.5,811.5 994.5,812.5 1001.5,813.5 1008.5,785.5 1015.5,781.5 1022.5,775.5 1029.5,781.5 1036.5,780.5 1043.5,781.5 1050.5,773.5 1057.5,778.5 1064.5,794.5 1071.5,794.5 1078.5,784.5 1085.5,773.5 1091.5,772.5 1098.5,772.5 1105.5,779.5 1112.5,773.5 1119.5,804.5 1126.5,815.5 1133.5,791.5 1140.5,776.5 1147.5,776.5 1154.5,774.5 1161.5,771.5 1168.5,774.5 1175.5,780.5 1182.5,799.5 1189.5,786.5 1196.5,784.5 1203.5,774.5 1210.5,775.5 1217.5,790.5 1224.5,803.5 1231.5,786.5 1238.5,791.5 1245.5,772.5 1252.5,768.5 1259.5,771.5 1266.5,771.5 1273.5,773.5 1279.5,768.5 1286.5,768.5 1293.5,772.5 1300.5,776.5 1307.5,786.5 1314.5,793.5 1321.5,799.5 1328.5,780.5 1335.5,774.5 1342.5,774.5 1349.5,774.5 1356.5,781.5 1363.5,774.5 1370.5,776.5 1377.5,769.5 1384.5,770.5 1391.5,778.5 1399.5,808.5 1405.5,774.5 1412.5,774.5" stroke="#c455d2" stroke-width="1.25" fill="none" stroke-linejoin="round"/>
<path d="M20 459.8 H1412" stroke="#0d6512" stroke-width="2.6" fill="none"/>
<path d="M20 457.5 H1413" stroke="#000" stroke-width="1" stroke-dasharray="3 2" fill="none" shape-rendering="crispEdges"/>
<path d="M1412.5 458 V816" stroke="#000" stroke-width="1" stroke-dasharray="3 2" fill="none" shape-rendering="crispEdges"/>
<path d="M19 457 V817.6 M18 816.6 H1413" stroke="#000" stroke-width="2" fill="none" shape-rendering="crispEdges"/>
<path d="M27.5 817 V820 M34.5 817 V820 M40.5 817 V820 M47.5 817 V820 M61.5 817 V820 M68.5 817 V820 M75.5 817 V820 M82.5 817 V820 M96.5 817 V820 M103.5 817 V820 M110.5 817 V820 M117.5 817 V820 M131.5 817 V820 M138.5 817 V820 M145.5 817 V820 M152.5 817 V820 M166.5 817 V820 M173.5 817 V820 M180.5 817 V820 M187.5 817 V820 M201.5 817 V820 M208.5 817 V820 M215.5 817 V820 M222.5 817 V820 M235.5 817 V820 M242.5 817 V820 M249.5 817 V820 M256.5 817 V820 M270.5 817 V820 M277.5 817 V820 M284.5 817 V820 M291.5 817 V820 M305.5 817 V820 M312.5 817 V820 M319.5 817 V820 M326.5 817 V820 M340.5 817 V820 M347.5 817 V820 M354.5 817 V820 M361.5 817 V820 M375.5 817 V820 M382.5 817 V820 M389.5 817 V820 M396.5 817 V820 M410.5 817 V820 M417.5 817 V820 M423.5 817 V820 M430.5 817 V820 M444.5 817 V820 M451.5 817 V820 M458.5 817 V820 M465.5 817 V820 M479.5 817 V820 M486.5 817 V820 M493.5 817 V820 M500.5 817 V820 M514.5 817 V820 M521.5 817 V820 M528.5 817 V820 M535.5 817 V820 M549.5 817 V820 M556.5 817 V820 M563.5 817 V820 M570.5 817 V820 M584.5 817 V820 M591.5 817 V820 M598.5 817 V820 M605.5 817 V820 M618.5 817 V820 M625.5 817 V820 M632.5 817 V820 M639.5 817 V820 M653.5 817 V820 M660.5 817 V820 M667.5 817 V820 M674.5 817 V820 M688.5 817 V820 M695.5 817 V820 M702.5 817 V820 M709.5 817 V820 M723.5 817 V820 M730.5 817 V820 M737.5 817 V820 M744.5 817 V820 M758.5 817 V820 M765.5 817 V820 M772.5 817 V820 M779.5 817 V820 M793.5 817 V820 M800.5 817 V820 M806.5 817 V820 M813.5 817 V820 M827.5 817 V820 M834.5 817 V820 M841.5 817 V820 M848.5 817 V820 M862.5 817 V820 M869.5 817 V820 M876.5 817 V820 M883.5 817 V820 M897.5 817 V820 M904.5 817 V820 M911.5 817 V820 M918.5 817 V820 M932.5 817 V820 M939.5 817 V820 M946.5 817 V820 M953.5 817 V820 M967.5 817 V820 M974.5 817 V820 M981.5 817 V820 M988.5 817 V820 M1001.5 817 V820 M1008.5 817 V820 M1015.5 817 V820 M1022.5 817 V820 M1036.5 817 V820 M1043.5 817 V820 M1050.5 817 V820 M1057.5 817 V820 M1071.5 817 V820 M1078.5 817 V820 M1085.5 817 V820 M1092.5 817 V820 M1106.5 817 V820 M1113.5 817 V820 M1120.5 817 V820 M1127.5 817 V820 M1141.5 817 V820 M1148.5 817 V820 M1155.5 817 V820 M1162.5 817 V820 M1176.5 817 V820 M1183.5 817 V820 M1189.5 817 V820 M1196.5 817 V820 M1210.5 817 V820 M1217.5 817 V820 M1224.5 817 V820 M1231.5 817 V820 M1245.5 817 V820 M1252.5 817 V820 M1259.5 817 V820 M1266.5 817 V820 M1280.5 817 V820 M1287.5 817 V820 M1294.5 817 V820 M1301.5 817 V820 M1315.5 817 V820 M1322.5 817 V820 M1329.5 817 V820 M1336.5 817 V820 M1350.5 817 V820 M1357.5 817 V820 M1364.5 817 V820 M1371.5 817 V820 M1384.5 817 V820 M1391.5 817 V820 M1398.5 817 V820 M1405.5 817 V820 M15 817.5 H18 M15 745.5 H18 M15 673.5 H18 M15 601.5 H18 M15 530.5 H18 M15 458.5 H18 M16.5 802.5 H18 M16.5 788.5 H18 M16.5 774.5 H18 M16.5 759.5 H18 M16.5 730.5 H18 M16.5 716.5 H18 M16.5 702.5 H18 M16.5 687.5 H18 M16.5 659.5 H18 M16.5 644.5 H18 M16.5 630.5 H18 M16.5 616.5 H18 M16.5 587.5 H18 M16.5 573.5 H18 M16.5 558.5 H18 M16.5 544.5 H18 M16.5 515.5 H18 M16.5 501.5 H18 M16.5 487.5 H18 M16.5 472.5 H18" stroke="#555" stroke-width="1" fill="none" shape-rendering="crispEdges"/>
<path d="M20 817 V822 M54 817 V822 M89 817 V822 M124 817 V822 M159 817 V822 M194 817 V822 M229 817 V822 M263 817 V822 M298 817 V822 M333 817 V822 M368 817 V822 M403 817 V822 M437 817 V822 M472 817 V822 M507 817 V822 M542 817 V822 M577 817 V822 M611 817 V822 M646 817 V822 M681 817 V822 M716 817 V822 M751 817 V822 M786 817 V822 M820 817 V822 M855 817 V822 M890 817 V822 M925 817 V822 M960 817 V822 M994 817 V822 M1029 817 V822 M1064 817 V822 M1099 817 V822 M1134 817 V822 M1169 817 V822 M1203 817 V822 M1238 817 V822 M1273 817 V822 M1308 817 V822 M1343 817 V822 M1377 817 V822 M1412 817 V822" stroke="#000" stroke-width="2" fill="none" shape-rendering="crispEdges"/>
<g font-size="11" fill="#111"><text x="19.1" y="834" text-anchor="middle">0</text><text x="53.9" y="834" text-anchor="middle">5</text><text x="88.7" y="834" text-anchor="middle">10</text><text x="123.6" y="834" text-anchor="middle">15</text><text x="158.4" y="834" text-anchor="middle">20</text><text x="193.2" y="834" text-anchor="middle">25</text><text x="228" y="834" text-anchor="middle">30</text><text x="262.8" y="834" text-anchor="middle">35</text><text x="297.6" y="834" text-anchor="middle">40</text><text x="332.5" y="834" text-anchor="middle">45</text><text x="367.3" y="834" text-anchor="middle">50</text><text x="402.1" y="834" text-anchor="middle">55</text><text x="436.9" y="834" text-anchor="middle">60</text><text x="471.7" y="834" text-anchor="middle">65</text><text x="506.5" y="834" text-anchor="middle">70</text><text x="541.4" y="834" text-anchor="middle">75</text><text x="576.2" y="834" text-anchor="middle">80</text><text x="611" y="834" text-anchor="middle">85</text><text x="645.8" y="834" text-anchor="middle">90</text><text x="680.6" y="834" text-anchor="middle">95</text><text x="715.5" y="834" text-anchor="middle">100</text><text x="750.3" y="834" text-anchor="middle">105</text><text x="785.1" y="834" text-anchor="middle">110</text><text x="819.9" y="834" text-anchor="middle">115</text><text x="854.7" y="834" text-anchor="middle">120</text><text x="889.5" y="834" text-anchor="middle">125</text><text x="924.4" y="834" text-anchor="middle">130</text><text x="959.2" y="834" text-anchor="middle">135</text><text x="994" y="834" text-anchor="middle">140</text><text x="1028.8" y="834" text-anchor="middle">145</text><text x="1063.6" y="834" text-anchor="middle">150</text><text x="1098.4" y="834" text-anchor="middle">155</text><text x="1133.3" y="834" text-anchor="middle">160</text><text x="1168.1" y="834" text-anchor="middle">165</text><text x="1202.9" y="834" text-anchor="middle">170</text><text x="1237.7" y="834" text-anchor="middle">175</text><text x="1272.5" y="834" text-anchor="middle">180</text><text x="1307.3" y="834" text-anchor="middle">185</text><text x="1342.2" y="834" text-anchor="middle">190</text><text x="1377" y="834" text-anchor="middle">195</text><text x="1411.8" y="834" text-anchor="middle">200</text><text x="13" y="820.8" text-anchor="end">0</text><text x="13" y="749.1" text-anchor="end">1</text><text x="13" y="677.3" text-anchor="end">2</text><text x="13" y="605.6" text-anchor="end">3</text><text x="13" y="533.8" text-anchor="end">4</text><text x="13" y="462.1" text-anchor="end">5</text></g>
</svg>
<div class="a" style="left:29px;top:783px;width:24px;height:24px;background:#ececec;border:1px solid;border-color:#fbfbfb #9a9a9a #9a9a9a #fbfbfb;box-shadow:inset -1px -1px 0 #c4c4c4"><svg style="left:-1px;top:-1px" width="24" height="24" viewBox="0 0 24 24"><path d="M9 5.5 L16 12 L9 18.5 Z" fill="#178a8c"/></svg></div>
<div class="a" style="left:54px;top:783px;width:24px;height:24px;background:#ececec;border:1px solid;border-color:#fbfbfb #9a9a9a #9a9a9a #fbfbfb;box-shadow:inset -1px -1px 0 #c4c4c4"><svg style="left:-1px;top:-1px" width="24" height="24" viewBox="0 0 24 24"><rect x="7.5" y="7.5" width="9" height="9" fill="#000"/></svg></div>
<div class="a" style="left:79px;top:783px;width:24px;height:24px;background:#ececec;border:1px solid;border-color:#fbfbfb #9a9a9a #9a9a9a #fbfbfb;box-shadow:inset -1px -1px 0 #c4c4c4"><svg style="left:-1px;top:-1px" width="24" height="24" viewBox="0 0 24 24"><circle cx="12" cy="12" r="5.5" fill="#f00808"/></svg></div>
<div class="a" style="left:104px;top:783px;width:24px;height:24px;background:#ececec;border:1px solid;border-color:#fbfbfb #9a9a9a #9a9a9a #fbfbfb;box-shadow:inset -1px -1px 0 #c4c4c4"><svg style="left:-1px;top:-1px" width="24" height="24" viewBox="0 0 24 24"><rect x="5" y="6.5" width="13" height="2.6" fill="#0a3c8a"/><path d="M5 10.6 H18 L11.5 17.6 Z" fill="#0a3c8a"/></svg></div>
<div class="a" style="left:129px;top:783px;width:24px;height:24px;background:#ececec;border:1px solid;border-color:#fbfbfb #9a9a9a #9a9a9a #fbfbfb;box-shadow:inset -1px -1px 0 #c4c4c4"><svg style="left:-1px;top:-1px" width="24" height="24" viewBox="0 0 24 24"><path d="M13.5 5 V18 L6.5 11.5 Z" fill="#a4a4a4"/></svg></div>
<div class="a" style="left:154px;top:783px;width:24px;height:24px;background:#ececec;border:1px solid;border-color:#fbfbfb #9a9a9a #9a9a9a #fbfbfb;box-shadow:inset -1px -1px 0 #c4c4c4"><svg style="left:-1px;top:-1px" width="24" height="24" viewBox="0 0 24 24"><path d="M10 5 V18 L17 11.5 Z" fill="#a4a4a4"/></svg></div>
<!-- B/G indicator -->
<div class="a" style="left:1466px;top:757px;width:93px;height:82px;background:#000;border:1px solid;border-color:#909090 #fff #fff #909090"></div>
<svg style="left:0;top:0" width="1600" height="900" viewBox="0 0 1600 900">
<polygon points="1474.9,813.9 1488.7,798.5 1488.7,807.4 1476.5,822.0" fill="none" stroke="#b8b8b8" stroke-width="1.1" stroke-linejoin="round"/>
<polygon points="1491.9,794.4 1503.3,787.1 1504.1,796.9 1492.7,804.2" fill="#1fa05c" stroke="#1fa05c" stroke-width="1.1" stroke-linejoin="round"/>
<polygon points="1506.6,783.1 1517.1,778.2 1517.9,787.9 1507.4,793.3" fill="none" stroke="#b8b8b8" stroke-width="1.1" stroke-linejoin="round"/>
<polygon points="1520.4,776.1 1531.4,772.2 1531.7,782.2 1521.2,786.3" fill="none" stroke="#b8b8b8" stroke-width="1.1" stroke-linejoin="round"/>
<polygon points="1535.5,770.9 1546.4,769.2 1546.7,779.0 1536.1,781.4" fill="none" stroke="#b8b8b8" stroke-width="1.1" stroke-linejoin="round"/>
<circle cx="1505" cy="811.5" r="4.8" fill="#0a8a14" stroke="#bfe8c0" stroke-width="1"/>
<circle cx="1531.7" cy="810.7" r="15.3" fill="none" stroke="#fff" stroke-width="1.2"/>
<text x="1531.7" y="815" font-size="11.5" fill="#fff" text-anchor="middle" textLength="19" lengthAdjust="spacingAndGlyphs">B/G</text>
</svg>
<!-- status bar -->
<div class="a" style="left:0;top:839px;width:1430px;height:1px;background:#e8e8e8"></div>
<div class="a" style="left:0;top:840px;width:1430px;height:1px;background:#8e8e8e"></div>
<div class="a" style="left:0;top:841px;width:1430px;height:2px;background:#fcfcfc"></div>
<div class="a" style="left:1px;top:843px;width:98px;height:17px;border:1px solid;border-color:#b4b4b4 #fff #fff #b4b4b4"></div>
<div class="a" style="left:102px;top:843px;width:197px;height:17px;border:1px solid;border-color:#b4b4b4 #fff #fff #b4b4b4"></div>
<div class="a" style="left:302px;top:843px;width:1126px;height:17px;border:1px solid;border-color:#b4b4b4 #fff #fff #b4b4b4"></div>
<div class="a" style="left:24.4px;top:845px;font-size:12px;white-space:pre;line-height:normal;color:#111;transform:scaleX(0.914);transform-origin:0 0">Połączony</div>
<div class="a" style="left:114.0px;top:845px;font-size:12px;white-space:pre;line-height:normal;color:#111;transform:scaleX(0.920);transform-origin:0 0">ver. 1.10.27   2008-05-20  10:56:44</div>
<div class="a" style="left:1439px;top:844px;width:160px;height:16px;background:#008000;color:#d4f0d4;text-align:center;font-size:12px;line-height:18px">Gaz</div>
<!-- taskbar -->
<div class="a" id="tb" style="left:0;top:860px;width:1600px;height:40px;background:
radial-gradient(ellipse 52px 34px at 168px 20px,rgba(255,95,95,.95),rgba(250,90,90,.6) 60%,transparent),
radial-gradient(ellipse 90px 30px at 700px 8px,rgba(235,85,85,.45),transparent),
radial-gradient(ellipse 70px 26px at 860px 22px,rgba(220,70,75,.4),transparent),
radial-gradient(ellipse 80px 30px at 1010px 28px,rgba(160,18,18,.45),transparent),
radial-gradient(ellipse 90px 28px at 1120px 14px,rgba(225,75,80,.4),transparent),
radial-gradient(ellipse 70px 30px at 1250px 22px,rgba(150,15,20,.5),transparent),
radial-gradient(ellipse 60px 30px at 560px 30px,rgba(160,20,20,.35),transparent),
linear-gradient(180deg,rgba(255,255,255,.16) 0,rgba(255,255,255,.04) 40%,rgba(0,0,0,.05) 100%),
linear-gradient(90deg,#c93a3e 0,#c8383c 70px,#d04044 120px,#cc3438 215px,#c52a2e 260px,#c62c30 330px,#c52c30 640px,#c93438 900px,#bd282c 1000px,#c93a3e 1130px,#b82428 1220px,#a81c22 1300px,#b42a30 1380px,#c4484c 1420px,#c85054 1600px);
border-top:1px solid #f0a0a0;box-shadow:0 -1px 0 #7a2020"></div>
<div class="a" style="left:76px;top:861px;width:58px;height:38px;border:1px solid rgba(90,20,20,.55);border-radius:3px;box-shadow:inset 0 0 0 1px rgba(255,255,255,.5);background:linear-gradient(180deg,rgba(255,255,255,.34) 0,rgba(255,255,255,.18) 48%,rgba(255,255,255,.06) 52%,rgba(255,255,255,.14) 100%)"></div>
<div class="a" style="left:324px;top:861px;width:54px;height:38px;border:1px solid rgba(90,20,20,.55);border-radius:3px;box-shadow:inset 0 0 0 1px rgba(255,255,255,.5);background:linear-gradient(180deg,rgba(255,255,255,.34) 0,rgba(255,255,255,.18) 48%,rgba(255,255,255,.06) 52%,rgba(255,255,255,.14) 100%)"></div>
<div class="a" style="left:379px;top:862px;width:3px;height:38px;border:1px solid rgba(255,255,255,.35);border-left:none;border-radius:0 3px 0 0;background:rgba(255,255,255,.12)"></div>
<div class="a" style="left:447px;top:861px;width:59px;height:38px;border:1px solid rgba(90,20,20,.55);border-radius:3px;box-shadow:inset 0 0 0 1px rgba(255,255,255,.5);background:linear-gradient(180deg,rgba(255,255,255,.62) 0,rgba(255,255,255,.42) 48%,rgba(255,255,255,.22) 52%,rgba(255,255,255,.32) 100%)"></div>
<div class="a" style="left:510px;top:861px;width:58px;height:38px;border:1px solid rgba(90,20,20,.55);border-radius:3px;box-shadow:inset 0 0 0 1px rgba(255,255,255,.5);background:linear-gradient(180deg,rgba(255,255,255,.34) 0,rgba(255,255,255,.18) 48%,rgba(255,255,255,.06) 52%,rgba(255,255,255,.14) 100%)"></div>
<div class="a" style="left:572px;top:861px;width:58px;height:38px;border:1px solid rgba(90,20,20,.55);border-radius:3px;box-shadow:inset 0 0 0 1px rgba(255,255,255,.5);background:linear-gradient(180deg,rgba(255,255,255,.34) 0,rgba(255,255,255,.18) 48%,rgba(255,255,255,.06) 52%,rgba(255,255,255,.14) 100%)"></div>
<svg style="left:0;top:860px" width="1600" height="40" viewBox="0 860 1600 40">
<defs>
<radialGradient id="orb" cx=".5" cy=".35" r=".7"><stop offset="0" stop-color="#8fd0f4"/><stop offset=".45" stop-color="#2c7cc4"/><stop offset="1" stop-color="#0c2c64"/></radialGradient>
<linearGradient id="fold" x1="0" y1="0" x2="0" y2="1"><stop offset="0" stop-color="#fdf0b0"/><stop offset="1" stop-color="#e8c860"/></linearGradient>
<linearGradient id="stu" x1="0" y1="0" x2="1" y2="1"><stop offset="0" stop-color="#2050d0"/><stop offset=".35" stop-color="#20c060"/><stop offset=".65" stop-color="#f0e020"/><stop offset="1" stop-color="#e03020"/></linearGradient>
<linearGradient id="sky" x1="0" y1="0" x2="0" y2="1"><stop offset="0" stop-color="#6fb4ea"/><stop offset=".6" stop-color="#cfe8f8"/><stop offset="1" stop-color="#5a9ad0"/></linearGradient>
<linearGradient id="pdf" x1="0" y1="0" x2="0" y2="1"><stop offset="0" stop-color="#e01010"/><stop offset="1" stop-color="#7a0000"/></linearGradient>
<radialGradient id="ffx" cx=".5" cy=".4" r=".6"><stop offset="0" stop-color="#7fc0f0"/><stop offset="1" stop-color="#1848a0"/></radialGradient>
</defs>
<circle cx="27" cy="881" r="18.5" fill="#1a3050" opacity=".55"/><circle cx="27" cy="881" r="17" fill="url(#orb)" stroke="#c8e4f8" stroke-width="1" stroke-opacity=".7"/>
<path d="M19 873.5 q4 -2 7.5 -.3 l-1.2 7 q-3.5 -1.6 -7.3 .2z" fill="#f05a28"/><path d="M28 873.6 q4 1.6 7.5 -.2 l-1 7 q-3.6 1.8 -7.6 .2z" fill="#8cc63c"/><path d="M17.6 882 q3.8 -1.8 7.3 -.2 l-1.1 6.8 q-3.4 -1.6 -7.2 .2z" fill="#3a9ae0"/><path d="M26.6 882.2 q4 1.6 7.6 -.2 l-1 6.8 q-3.6 1.8 -7.6 .2z" fill="#fcc81c"/>
<g fill="#7c1818" opacity=".9"><rect x="58" y="865" width="2.1" height="2.1"/><rect x="61" y="865" width="2.1" height="2.1"/><rect x="65" y="865" width="2.1" height="2.1"/><rect x="58" y="868" width="2.1" height="2.1"/><rect x="61" y="868" width="2.1" height="2.1"/><rect x="65" y="868" width="2.1" height="2.1"/><rect x="58" y="872" width="2.1" height="2.1"/><rect x="61" y="872" width="2.1" height="2.1"/><rect x="65" y="872" width="2.1" height="2.1"/><rect x="58" y="876" width="2.1" height="2.1"/><rect x="61" y="876" width="2.1" height="2.1"/><rect x="65" y="876" width="2.1" height="2.1"/><rect x="58" y="880" width="2.1" height="2.1"/><rect x="61" y="880" width="2.1" height="2.1"/><rect x="65" y="880" width="2.1" height="2.1"/><rect x="58" y="884" width="2.1" height="2.1"/><rect x="61" y="884" width="2.1" height="2.1"/><rect x="65" y="884" width="2.1" height="2.1"/><rect x="58" y="888" width="2.1" height="2.1"/><rect x="61" y="888" width="2.1" height="2.1"/><rect x="65" y="888" width="2.1" height="2.1"/><rect x="58" y="892" width="2.1" height="2.1"/><rect x="61" y="892" width="2.1" height="2.1"/><rect x="65" y="892" width="2.1" height="2.1"/></g>
<g fill="#701414" opacity=".85"><rect x="1298.0" y="865.0" width="1.4" height="1.4"/><rect x="1301.0" y="865.0" width="1.4" height="1.4"/><rect x="1304.0" y="865.0" width="1.4" height="1.4"/><rect x="1298.0" y="868.5" width="1.4" height="1.4"/><rect x="1301.0" y="868.5" width="1.4" height="1.4"/><rect x="1304.0" y="868.5" width="1.4" height="1.4"/><rect x="1298.0" y="872.0" width="1.4" height="1.4"/><rect x="1301.0" y="872.0" width="1.4" height="1.4"/><rect x="1304.0" y="872.0" width="1.4" height="1.4"/><rect x="1298.0" y="875.5" width="1.4" height="1.4"/><rect x="1301.0" y="875.5" width="1.4" height="1.4"/><rect x="1304.0" y="875.5" width="1.4" height="1.4"/><rect x="1298.0" y="879.0" width="1.4" height="1.4"/><rect x="1301.0" y="879.0" width="1.4" height="1.4"/><rect x="1304.0" y="879.0" width="1.4" height="1.4"/><rect x="1298.0" y="882.5" width="1.4" height="1.4"/><rect x="1301.0" y="882.5" width="1.4" height="1.4"/><rect x="1304.0" y="882.5" width="1.4" height="1.4"/><rect x="1298.0" y="886.0" width="1.4" height="1.4"/><rect x="1301.0" y="886.0" width="1.4" height="1.4"/><rect x="1304.0" y="886.0" width="1.4" height="1.4"/><rect x="1298.0" y="889.5" width="1.4" height="1.4"/><rect x="1301.0" y="889.5" width="1.4" height="1.4"/><rect x="1304.0" y="889.5" width="1.4" height="1.4"/><rect x="1298.0" y="893.0" width="1.4" height="1.4"/><rect x="1301.0" y="893.0" width="1.4" height="1.4"/><rect x="1304.0" y="893.0" width="1.4" height="1.4"/></g>
<path d="M91 870 h9 l2 2 h14 v6 h-25z" fill="#e8c050"/><rect x="90" y="873" width="30" height="19" rx="1.5" fill="url(#fold)" stroke="#c8a040" stroke-width=".8"/><rect x="93" y="869" width="4" height="3" fill="#38a858"/><rect x="99" y="870" width="4" height="3" fill="#d85030"/><rect x="108" y="872" width="4" height="3" fill="#3878c8"/><path d="M93 893 v-8 q0 -3 3 -3 h16 q3 0 3 3 v8 h-4 v-5 h-14 v5z" fill="#7cc0ec" stroke="#4a90c8" stroke-width=".8"/>
<rect x="158" y="869" width="20" height="22" fill="#b8cce4" opacity=".85"/><rect x="154" y="868" width="20" height="24" rx="1" fill="#c8d8ec" stroke="#8aa4c8" stroke-width=".8"/><circle cx="164" cy="880" r="8.5" fill="#f08020" stroke="#fff" stroke-width="1"/><path d="M161 875 l8 5 l-8 5z" fill="#fff"/>
<rect x="215" y="866" width="28" height="20" rx="1" fill="#102848" stroke="#06101c" stroke-width="1"/><rect x="217" y="868" width="24" height="16" fill="#4a8cdc"/><path d="M217 868 h3 q4 8 0 16 h-3z" fill="#1c4a90"/><path d="M221.5 868 q4.5 8 0 16" stroke="#0c2450" stroke-width="1.4" fill="none"/><path d="M229 868 q-7 8 0 16" stroke="#0c2450" stroke-width="1.6" fill="none"/><text x="233" y="878.5" font-size="6" font-weight="bold" fill="#e8f0ff" text-anchor="middle">KMP</text><rect x="225" y="886" width="8" height="3" fill="#181818"/><ellipse cx="229" cy="890.5" rx="9" ry="2.8" fill="#101010"/>
<circle cx="292" cy="879" r="12.5" fill="url(#ffx)"/><path d="M286 871 q5 -2 9 1 q-3 2 -2 5 q-4 -1 -7 -6z" fill="#2c64c0" opacity=".6"/><path d="M278.5 872.5 q-4 11 3 18.5 q7 6 16 3 q9 -4 9 -14 q0 -6 -3.5 -10.5 q1.200 5.500 -.6 9 q-.4 6 -6.400 8.500 q-6 2 -10 -1.500 q3 .5 5 -1 q-4 -1 -5 -4.500 q1.500 -2 4 -1.500 q.5 -2.500 3 -3 q-2 -2.500 -5 -2 q-1.500 -2 -1 -4 q-3 1 -4 4 q-1.500 -2 -.5 -4.500 q-2.500 1.500 -4 3z" fill="#e8741c"/><path d="M303 869.500 q4 5 3.500 11 q-.5 9 -9 13 q6 -5 6.500 -12 q.5 -6 -1 -12z" fill="#f8c040"/>
<path d="M358.0 880.0 L365.2 880.0" stroke="#e81010" stroke-width="2.6"/><path d="M355.7 885.7 L360.7 890.7" stroke="#e81010" stroke-width="2.6"/><path d="M350.0 888.0 L350.0 895.2" stroke="#e81010" stroke-width="2.6"/><path d="M344.3 885.7 L339.3 890.7" stroke="#e81010" stroke-width="2.6"/><path d="M342.0 880.0 L334.8 880.0" stroke="#e81010" stroke-width="2.6"/><path d="M344.3 874.3 L339.3 869.3" stroke="#e81010" stroke-width="2.6"/><path d="M350.0 872.0 L350.0 864.8" stroke="#e81010" stroke-width="2.6"/><path d="M355.7 874.3 L360.7 869.3" stroke="#e81010" stroke-width="2.6"/><circle cx="350" cy="880" r="10.6" fill="#e81010"/><circle cx="350" cy="880" r="9" fill="#ffd818"/><circle cx="348" cy="877" r="5" fill="#ffee70" opacity=".6"/><circle cx="346.8" cy="877.6" r="1.1" fill="#503000"/><circle cx="353.2" cy="877.6" r="1.1" fill="#503000"/><path d="M345 882 q5 4.5 10 0" stroke="#503000" stroke-width="1.2" fill="none"/>
<rect x="403" y="865" width="28" height="30" fill="#1a1a1a"/><rect x="407" y="867" width="19" height="26" fill="url(#stu)"/>
<rect x="403.8" y="868" width="2.4" height="2.4" fill="#ddd"/><rect x="427.6" y="868" width="2.4" height="2.4" fill="#ddd"/><rect x="403.8" y="872" width="2.4" height="2.4" fill="#ddd"/><rect x="427.6" y="872" width="2.4" height="2.4" fill="#ddd"/><rect x="403.8" y="877" width="2.4" height="2.4" fill="#ddd"/><rect x="427.6" y="877" width="2.4" height="2.4" fill="#ddd"/><rect x="403.8" y="881" width="2.4" height="2.4" fill="#ddd"/><rect x="427.6" y="881" width="2.4" height="2.4" fill="#ddd"/><rect x="403.8" y="886" width="2.4" height="2.4" fill="#ddd"/><rect x="427.6" y="886" width="2.4" height="2.4" fill="#ddd"/><rect x="403.8" y="891" width="2.4" height="2.4" fill="#ddd"/><rect x="427.6" y="891" width="2.4" height="2.4" fill="#ddd"/>
<rect x="400" y="869" width="26" height="9" fill="#111" stroke="#888" stroke-width=".5"/><text x="413" y="876.3" font-size="6.6" font-weight="bold" fill="#fff" text-anchor="middle" textLength="22">STUDIO</text>
<circle cx="476.5" cy="880.5" r="14.2" fill="#ffe600" stroke="#d02018" stroke-width="1.4"/><text transform="translate(464.5,882) scale(1.3,1)" font-size="13" font-weight="bold" fill="#d81c14" stroke="#d81c14" stroke-width=".7">A</text><text transform="translate(475.5,890.5) scale(1.3,1)" font-size="13" font-weight="bold" fill="#d81c14" stroke="#d81c14" stroke-width=".7">C</text>
<path d="M525 873 v-6 h7 M547 867 h7 v6 M554 883 v6 h-7 M532 889 h-7 v-6" fill="none" stroke="#3a88d8" stroke-width="2.4" stroke-linejoin="round"/><rect x="527" y="869.5" width="24" height="18.5" fill="url(#sky)" stroke="#fff" stroke-width="1.2"/><path d="M527.6 884 q5 -7 10 -5 q6 2 13 -1 v9.5 h-23z" fill="#3a6a50" opacity=".9"/><path d="M527.6 885.5 h23 v2.5 h-23z" fill="#7ab0e0"/>
<rect x="587" y="865" width="28" height="26" fill="url(#pdf)" stroke="#5a0000" stroke-width=".6"/><path d="M593 888 q5 -6 7.5 -17 q1.5 -1.5 1.6 1.5 q-.5 7 9.5 12.5 q1.5 1.8 -1.5 1.5 q-8 -2.5 -17.5 2.5 q-1.5 .5 .4 -1z" fill="none" stroke="#fff" stroke-width="1.3"/>
<text x="1316" y="882" font-size="12" fill="#fff">PL</text>
<rect x="1338.5" y="873.5" width="14" height="9" rx="1.5" fill="#d8d8d8" stroke="#f4f4f4" stroke-width=".8" opacity=".9"/><path d="M1340.5 876.5 h10 M1340.5 878.7 h10 M1342 880.8 h7" stroke="#707070" stroke-width="1" stroke-dasharray="1.4 1"/><path d="M1341 873 q2 -4 5 -2.5 q3 1 5 -1.5" stroke="#e8e8e8" stroke-width="1" fill="none"/>
<path d="M1366 883.5 h7 l-3.5 -4z" fill="#fff"/>
<path d="M1391 877.5 h2.5 l4.5 -4.5 v14 l-4.5 -4.5 h-2.5z" fill="#f4f4f4" stroke="#444" stroke-width=".5"/>
<rect x="1410" y="873" width="15.5" height="15" fill="#1c1c24" stroke="#555" stroke-width=".6"/><circle cx="1417.7" cy="880.5" r="5.6" fill="#3a4878" stroke="#9098b0" stroke-width=".8"/><circle cx="1417.7" cy="880.5" r="2.8" fill="#10183c"/><circle cx="1416.4" cy="879" r="1" fill="#a8c0f0"/>
<circle cx="1441.5" cy="880.5" r="7.3" fill="#f08818" stroke="#f8c060" stroke-width="1"/><path d="M1438.2 884 a4.2 4.2 0 1 1 5.6 .6" stroke="#fff" stroke-width="2.2" fill="none"/>
<path d="M1460 874 v4 h3 v-4 M1461.5 878 v8 h3" stroke="#fff" stroke-width="1.3" fill="none"/><rect x="1464" y="876" width="10" height="8" fill="#c82020" stroke="#fff" stroke-width="1.2"/><path d="M1466 887.5 h7" stroke="#fff" stroke-width="1.4"/><rect x="1468" y="881.5" width="6" height="4.5" fill="#e02020"/>
<rect x="1483" y="876" width="8" height="10" rx="1" fill="#c01818" stroke="#fff" stroke-width="1.1"/><path d="M1490 873 v3.5 M1494 873 v3.5" stroke="#fff" stroke-width="1.3"/><path d="M1488.5 876.5 h7 v3.5 q0 2.5 -2.5 2.8 v3.5 h-2 v-3.5 q-2.5 -.3 -2.5 -2.8z" fill="#fff"/><rect x="1484.5" y="882" width="4" height="3.5" fill="#e82020"/>
<text x="1545" y="877.6" font-size="12" fill="#fff" text-anchor="middle" textLength="28" lengthAdjust="spacingAndGlyphs">20:02</text><text x="1545" y="893.8" font-size="12" fill="#fff" text-anchor="middle" textLength="58" lengthAdjust="spacingAndGlyphs">2013-01-24</text>
</svg>
<div class="a" style="left:1586px;top:861px;width:14px;height:39px;border:1px solid rgba(255,255,255,.45);border-right:none;background:linear-gradient(180deg,rgba(255,255,255,.32) 0,rgba(255,255,255,.12) 50%,rgba(255,255,255,.05) 100%);box-shadow:-1px 0 0 rgba(80,10,10,.5)"></div>
</body></html>
